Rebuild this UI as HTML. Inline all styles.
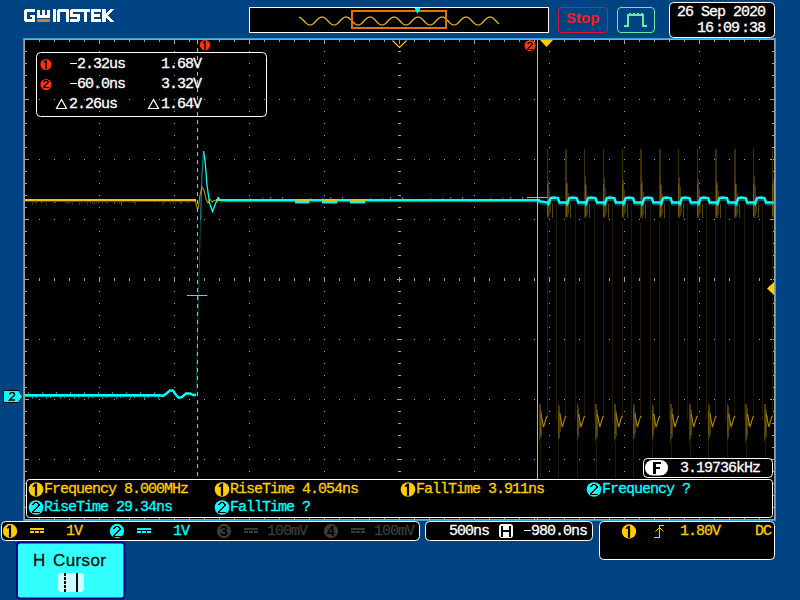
<!DOCTYPE html>
<html><head><meta charset="utf-8"><style>
html,body{margin:0;padding:0}
body{width:800px;height:600px;overflow:hidden;background:#004383;position:relative}
svg{position:absolute;left:0;top:0}
.m{position:absolute;white-space:pre;font-family:"Liberation Mono",monospace;font-size:15px;letter-spacing:-1px;line-height:15px;-webkit-text-stroke:0.3px currentColor}
.s{position:absolute;white-space:pre;font-family:"Liberation Sans",sans-serif;font-weight:bold}
</style></head><body>
<svg width="800" height="600" viewBox="0 0 800 600">
<g shape-rendering="crispEdges"><rect x="25" y="9" width="10" height="3" fill="#fff"/><rect x="24" y="10" width="3" height="11" fill="#fff"/><rect x="25" y="19" width="10" height="3" fill="#fff"/><rect x="32" y="15" width="3" height="6" fill="#fff"/><rect x="30" y="15" width="5" height="2" fill="#fff"/><rect x="37" y="10" width="3" height="8" fill="#fff"/><rect x="42" y="10" width="3" height="8" fill="#fff"/><rect x="47" y="10" width="3" height="8" fill="#fff"/><rect x="37" y="15" width="13" height="3" fill="#fff"/><rect x="37" y="19" width="13" height="3" fill="#e07810"/><rect x="53" y="9" width="3" height="13" fill="#fff"/><rect x="57" y="10" width="3" height="12" fill="#fff"/><rect x="58" y="9" width="11" height="3" fill="#fff"/><rect x="66" y="9" width="3" height="13" fill="#fff"/><rect x="71" y="9" width="9" height="3" fill="#fff"/><rect x="70" y="10" width="3" height="7" fill="#fff"/><rect x="71" y="14" width="9" height="3" fill="#fff"/><rect x="77" y="14" width="3" height="7" fill="#fff"/><rect x="70" y="19" width="9" height="3" fill="#fff"/><rect x="80" y="9" width="10" height="3" fill="#fff"/><rect x="84" y="9" width="3" height="13" fill="#fff"/><rect x="91" y="9" width="10" height="3" fill="#fff"/><rect x="91" y="9" width="3" height="13" fill="#fff"/><rect x="91" y="14" width="9" height="3" fill="#fff"/><rect x="91" y="19" width="10" height="3" fill="#fff"/><rect x="102" y="9" width="4" height="13" fill="#fff"/><polygon points="105,14 110.5,9 114,9 107.5,15.5 114,22 110.5,22 105,17" fill="#fff"/></g>
<rect x="249.5" y="7.5" width="299" height="25" fill="#000" stroke="#fff" stroke-width="1"/>
<polyline points="299.0,17.14 299.5,17.30 300.0,17.54 300.5,17.83 301.0,18.17 301.5,18.56 302.0,19.00 302.5,19.47 303.0,19.96 303.5,20.48 304.0,21.00 304.5,21.52 305.0,22.04 305.5,22.53 306.0,23.00 306.5,23.44 307.0,23.83 307.5,24.17 308.0,24.46 308.5,24.70 309.0,24.86 309.5,24.97 310.0,25.00 310.5,24.97 311.0,24.86 311.5,24.70 312.0,24.46 312.5,24.17 313.0,23.83 313.5,23.44 314.0,23.00 314.5,22.53 315.0,22.04 315.5,21.52 316.0,21.00 316.5,20.48 317.0,19.96 317.5,19.47 318.0,19.00 318.5,18.56 319.0,18.17 319.5,17.83 320.0,17.54 320.5,17.30 321.0,17.14 321.5,17.03 322.0,17.00 322.5,17.03 323.0,17.14 323.5,17.30 324.0,17.54 324.5,17.83 325.0,18.17 325.5,18.56 326.0,19.00 326.5,19.47 327.0,19.96 327.5,20.48 328.0,21.00 328.5,21.52 329.0,22.04 329.5,22.53 330.0,23.00 330.5,23.44 331.0,23.83 331.5,24.17 332.0,24.46 332.5,24.70 333.0,24.86 333.5,24.97 334.0,25.00 334.5,24.97 335.0,24.86 335.5,24.70 336.0,24.46 336.5,24.17 337.0,23.83 337.5,23.44 338.0,23.00 338.5,22.53 339.0,22.04 339.5,21.52 340.0,21.00 340.5,20.48 341.0,19.96 341.5,19.47 342.0,19.00 342.5,18.56 343.0,18.17 343.5,17.83 344.0,17.54 344.5,17.30 345.0,17.14 345.5,17.03 346.0,17.00 346.5,17.03 347.0,17.14 347.5,17.30 348.0,17.54 348.5,17.83 349.0,18.17 349.5,18.56 350.0,19.00 350.5,19.47 351.0,19.96 351.5,20.48 352.0,21.00 352.5,21.52 353.0,22.04 353.5,22.53 354.0,23.00 354.5,23.44 355.0,23.83 355.5,24.17 356.0,24.46 356.5,24.70 357.0,24.86 357.5,24.97 358.0,25.00 358.5,24.97 359.0,24.86 359.5,24.70 360.0,24.46 360.5,24.17 361.0,23.83 361.5,23.44 362.0,23.00 362.5,22.53 363.0,22.04 363.5,21.52 364.0,21.00 364.5,20.48 365.0,19.96 365.5,19.47 366.0,19.00 366.5,18.56 367.0,18.17 367.5,17.83 368.0,17.54 368.5,17.30 369.0,17.14 369.5,17.03 370.0,17.00 370.5,17.03 371.0,17.14 371.5,17.30 372.0,17.54 372.5,17.83 373.0,18.17 373.5,18.56 374.0,19.00 374.5,19.47 375.0,19.96 375.5,20.48 376.0,21.00 376.5,21.52 377.0,22.04 377.5,22.53 378.0,23.00 378.5,23.44 379.0,23.83 379.5,24.17 380.0,24.46 380.5,24.70 381.0,24.86 381.5,24.97 382.0,25.00 382.5,24.97 383.0,24.86 383.5,24.70 384.0,24.46 384.5,24.17 385.0,23.83 385.5,23.44 386.0,23.00 386.5,22.53 387.0,22.04 387.5,21.52 388.0,21.00 388.5,20.48 389.0,19.96 389.5,19.47 390.0,19.00 390.5,18.56 391.0,18.17 391.5,17.83 392.0,17.54 392.5,17.30 393.0,17.14 393.5,17.03 394.0,17.00 394.5,17.03 395.0,17.14 395.5,17.30 396.0,17.54 396.5,17.83 397.0,18.17 397.5,18.56 398.0,19.00 398.5,19.47 399.0,19.96 399.5,20.48 400.0,21.00 400.5,21.52 401.0,22.04 401.5,22.53 402.0,23.00 402.5,23.44 403.0,23.83 403.5,24.17 404.0,24.46 404.5,24.70 405.0,24.86 405.5,24.97 406.0,25.00 406.5,24.97 407.0,24.86 407.5,24.70 408.0,24.46 408.5,24.17 409.0,23.83 409.5,23.44 410.0,23.00 410.5,22.53 411.0,22.04 411.5,21.52 412.0,21.00 412.5,20.48 413.0,19.96 413.5,19.47 414.0,19.00 414.5,18.56 415.0,18.17 415.5,17.83 416.0,17.54 416.5,17.30 417.0,17.14 417.5,17.03 418.0,17.00 418.5,17.03 419.0,17.14 419.5,17.30 420.0,17.54 420.5,17.83 421.0,18.17 421.5,18.56 422.0,19.00 422.5,19.47 423.0,19.96 423.5,20.48 424.0,21.00 424.5,21.52 425.0,22.04 425.5,22.53 426.0,23.00 426.5,23.44 427.0,23.83 427.5,24.17 428.0,24.46 428.5,24.70 429.0,24.86 429.5,24.97 430.0,25.00 430.5,24.97 431.0,24.86 431.5,24.70 432.0,24.46 432.5,24.17 433.0,23.83 433.5,23.44 434.0,23.00 434.5,22.53 435.0,22.04 435.5,21.52 436.0,21.00 436.5,20.48 437.0,19.96 437.5,19.47 438.0,19.00 438.5,18.56 439.0,18.17 439.5,17.83 440.0,17.54 440.5,17.30 441.0,17.14 441.5,17.03 442.0,17.00 442.5,17.03 443.0,17.14 443.5,17.30 444.0,17.54 444.5,17.83 445.0,18.17 445.5,18.56 446.0,19.00 446.5,19.47 447.0,19.96 447.5,20.48 448.0,21.00 448.5,21.52 449.0,22.04 449.5,22.53 450.0,23.00 450.5,23.44 451.0,23.83 451.5,24.17 452.0,24.46 452.5,24.70 453.0,24.86 453.5,24.97 454.0,25.00 454.5,24.97 455.0,24.86 455.5,24.70 456.0,24.46 456.5,24.17 457.0,23.83 457.5,23.44 458.0,23.00 458.5,22.53 459.0,22.04 459.5,21.52 460.0,21.00 460.5,20.48 461.0,19.96 461.5,19.47 462.0,19.00 462.5,18.56 463.0,18.17 463.5,17.83 464.0,17.54 464.5,17.30 465.0,17.14 465.5,17.03 466.0,17.00 466.5,17.03 467.0,17.14 467.5,17.30 468.0,17.54 468.5,17.83 469.0,18.17 469.5,18.56 470.0,19.00 470.5,19.47 471.0,19.96 471.5,20.48 472.0,21.00 472.5,21.52 473.0,22.04 473.5,22.53 474.0,23.00 474.5,23.44 475.0,23.83 475.5,24.17 476.0,24.46 476.5,24.70 477.0,24.86 477.5,24.97 478.0,25.00 478.5,24.97 479.0,24.86 479.5,24.70 480.0,24.46 480.5,24.17 481.0,23.83 481.5,23.44 482.0,23.00 482.5,22.53 483.0,22.04 483.5,21.52 484.0,21.00 484.5,20.48 485.0,19.96 485.5,19.47 486.0,19.00 486.5,18.56 487.0,18.17 487.5,17.83 488.0,17.54 488.5,17.30 489.0,17.14 489.5,17.03 490.0,17.00 490.5,17.03 491.0,17.14 491.5,17.30 492.0,17.54 492.5,17.83 493.0,18.17 493.5,18.56 494.0,19.00 494.5,19.47 495.0,19.96 495.5,20.48 496.0,21.00 496.5,21.52 497.0,22.04 497.5,22.53 498.0,23.00 498.5,23.44 499.0,23.83" fill="none" stroke="#f2c200" stroke-width="1.2"/>
<rect x="352" y="11" width="94" height="17" fill="none" stroke="#e07010" stroke-width="2"/>
<polygon points="414.5,8 420.5,8 417.5,14" fill="#00ffff"/>
<rect x="558.5" y="7.5" width="49" height="25" rx="3" fill="none" stroke="#e8102a" stroke-width="1"/>
<rect x="617.5" y="7.5" width="37" height="25" rx="3.5" fill="none" stroke="#66ee99" stroke-width="1"/>
<g shape-rendering="crispEdges"><rect x="624" y="25" width="5" height="2" fill="#66ee99"/><rect x="627" y="14" width="2" height="13" fill="#66ee99"/><rect x="627" y="14" width="17" height="2" fill="#66ee99"/><rect x="642" y="14" width="2" height="13" fill="#66ee99"/><rect x="642" y="25" width="5" height="2" fill="#66ee99"/><rect x="629" y="13" width="2" height="1" fill="#66ee99"/><rect x="633" y="13" width="2" height="1" fill="#66ee99"/><rect x="637" y="13" width="2" height="1" fill="#66ee99"/><rect x="641" y="13" width="2" height="1" fill="#66ee99"/></g>
<rect x="669.5" y="2.5" width="105" height="35" rx="4" fill="#000" stroke="#fff" stroke-width="1"/>
<g shape-rendering="crispEdges"><rect x="24" y="39" width="751" height="481" fill="#000"/><rect x="23" y="38" width="753" height="1" fill="#3a9ad8"/><rect x="23" y="38" width="1" height="483" fill="#3a9ad8"/><rect x="775" y="38" width="1" height="483" fill="#3a9ad8"/><rect x="23" y="520" width="753" height="1" fill="#3a9ad8"/><rect x="24" y="39" width="751" height="1" fill="#a0a0a0"/><rect x="24" y="39" width="1" height="481" fill="#a0a0a0"/><rect x="774" y="39" width="1" height="481" fill="#a0a0a0"/><rect x="24" y="519" width="751" height="1" fill="#a0a0a0"/><rect x="39" y="40" width="1" height="2" fill="#a0a0a0"/><rect x="39" y="517" width="1" height="2" fill="#a0a0a0"/><rect x="54" y="40" width="1" height="2" fill="#a0a0a0"/><rect x="54" y="517" width="1" height="2" fill="#a0a0a0"/><rect x="69" y="40" width="1" height="2" fill="#a0a0a0"/><rect x="69" y="517" width="1" height="2" fill="#a0a0a0"/><rect x="84" y="40" width="1" height="2" fill="#a0a0a0"/><rect x="84" y="517" width="1" height="2" fill="#a0a0a0"/><rect x="99" y="40" width="1" height="4" fill="#a0a0a0"/><rect x="99" y="515" width="1" height="4" fill="#a0a0a0"/><rect x="114" y="40" width="1" height="2" fill="#a0a0a0"/><rect x="114" y="517" width="1" height="2" fill="#a0a0a0"/><rect x="129" y="40" width="1" height="2" fill="#a0a0a0"/><rect x="129" y="517" width="1" height="2" fill="#a0a0a0"/><rect x="144" y="40" width="1" height="2" fill="#a0a0a0"/><rect x="144" y="517" width="1" height="2" fill="#a0a0a0"/><rect x="159" y="40" width="1" height="2" fill="#a0a0a0"/><rect x="159" y="517" width="1" height="2" fill="#a0a0a0"/><rect x="174" y="40" width="1" height="4" fill="#a0a0a0"/><rect x="174" y="515" width="1" height="4" fill="#a0a0a0"/><rect x="189" y="40" width="1" height="2" fill="#a0a0a0"/><rect x="189" y="517" width="1" height="2" fill="#a0a0a0"/><rect x="204" y="40" width="1" height="2" fill="#a0a0a0"/><rect x="204" y="517" width="1" height="2" fill="#a0a0a0"/><rect x="219" y="40" width="1" height="2" fill="#a0a0a0"/><rect x="219" y="517" width="1" height="2" fill="#a0a0a0"/><rect x="234" y="40" width="1" height="2" fill="#a0a0a0"/><rect x="234" y="517" width="1" height="2" fill="#a0a0a0"/><rect x="249" y="40" width="1" height="4" fill="#a0a0a0"/><rect x="249" y="515" width="1" height="4" fill="#a0a0a0"/><rect x="264" y="40" width="1" height="2" fill="#a0a0a0"/><rect x="264" y="517" width="1" height="2" fill="#a0a0a0"/><rect x="279" y="40" width="1" height="2" fill="#a0a0a0"/><rect x="279" y="517" width="1" height="2" fill="#a0a0a0"/><rect x="294" y="40" width="1" height="2" fill="#a0a0a0"/><rect x="294" y="517" width="1" height="2" fill="#a0a0a0"/><rect x="309" y="40" width="1" height="2" fill="#a0a0a0"/><rect x="309" y="517" width="1" height="2" fill="#a0a0a0"/><rect x="324" y="40" width="1" height="4" fill="#a0a0a0"/><rect x="324" y="515" width="1" height="4" fill="#a0a0a0"/><rect x="339" y="40" width="1" height="2" fill="#a0a0a0"/><rect x="339" y="517" width="1" height="2" fill="#a0a0a0"/><rect x="354" y="40" width="1" height="2" fill="#a0a0a0"/><rect x="354" y="517" width="1" height="2" fill="#a0a0a0"/><rect x="369" y="40" width="1" height="2" fill="#a0a0a0"/><rect x="369" y="517" width="1" height="2" fill="#a0a0a0"/><rect x="384" y="40" width="1" height="2" fill="#a0a0a0"/><rect x="384" y="517" width="1" height="2" fill="#a0a0a0"/><rect x="399" y="40" width="1" height="4" fill="#a0a0a0"/><rect x="399" y="515" width="1" height="4" fill="#a0a0a0"/><rect x="414" y="40" width="1" height="2" fill="#a0a0a0"/><rect x="414" y="517" width="1" height="2" fill="#a0a0a0"/><rect x="429" y="40" width="1" height="2" fill="#a0a0a0"/><rect x="429" y="517" width="1" height="2" fill="#a0a0a0"/><rect x="444" y="40" width="1" height="2" fill="#a0a0a0"/><rect x="444" y="517" width="1" height="2" fill="#a0a0a0"/><rect x="459" y="40" width="1" height="2" fill="#a0a0a0"/><rect x="459" y="517" width="1" height="2" fill="#a0a0a0"/><rect x="474" y="40" width="1" height="4" fill="#a0a0a0"/><rect x="474" y="515" width="1" height="4" fill="#a0a0a0"/><rect x="489" y="40" width="1" height="2" fill="#a0a0a0"/><rect x="489" y="517" width="1" height="2" fill="#a0a0a0"/><rect x="504" y="40" width="1" height="2" fill="#a0a0a0"/><rect x="504" y="517" width="1" height="2" fill="#a0a0a0"/><rect x="519" y="40" width="1" height="2" fill="#a0a0a0"/><rect x="519" y="517" width="1" height="2" fill="#a0a0a0"/><rect x="534" y="40" width="1" height="2" fill="#a0a0a0"/><rect x="534" y="517" width="1" height="2" fill="#a0a0a0"/><rect x="549" y="40" width="1" height="4" fill="#a0a0a0"/><rect x="549" y="515" width="1" height="4" fill="#a0a0a0"/><rect x="564" y="40" width="1" height="2" fill="#a0a0a0"/><rect x="564" y="517" width="1" height="2" fill="#a0a0a0"/><rect x="579" y="40" width="1" height="2" fill="#a0a0a0"/><rect x="579" y="517" width="1" height="2" fill="#a0a0a0"/><rect x="594" y="40" width="1" height="2" fill="#a0a0a0"/><rect x="594" y="517" width="1" height="2" fill="#a0a0a0"/><rect x="609" y="40" width="1" height="2" fill="#a0a0a0"/><rect x="609" y="517" width="1" height="2" fill="#a0a0a0"/><rect x="624" y="40" width="1" height="4" fill="#a0a0a0"/><rect x="624" y="515" width="1" height="4" fill="#a0a0a0"/><rect x="639" y="40" width="1" height="2" fill="#a0a0a0"/><rect x="639" y="517" width="1" height="2" fill="#a0a0a0"/><rect x="654" y="40" width="1" height="2" fill="#a0a0a0"/><rect x="654" y="517" width="1" height="2" fill="#a0a0a0"/><rect x="669" y="40" width="1" height="2" fill="#a0a0a0"/><rect x="669" y="517" width="1" height="2" fill="#a0a0a0"/><rect x="684" y="40" width="1" height="2" fill="#a0a0a0"/><rect x="684" y="517" width="1" height="2" fill="#a0a0a0"/><rect x="699" y="40" width="1" height="4" fill="#a0a0a0"/><rect x="699" y="515" width="1" height="4" fill="#a0a0a0"/><rect x="714" y="40" width="1" height="2" fill="#a0a0a0"/><rect x="714" y="517" width="1" height="2" fill="#a0a0a0"/><rect x="729" y="40" width="1" height="2" fill="#a0a0a0"/><rect x="729" y="517" width="1" height="2" fill="#a0a0a0"/><rect x="744" y="40" width="1" height="2" fill="#a0a0a0"/><rect x="744" y="517" width="1" height="2" fill="#a0a0a0"/><rect x="759" y="40" width="1" height="2" fill="#a0a0a0"/><rect x="759" y="517" width="1" height="2" fill="#a0a0a0"/><rect x="25" y="51" width="2" height="1" fill="#a0a0a0"/><rect x="772" y="51" width="2" height="1" fill="#a0a0a0"/><rect x="25" y="63" width="2" height="1" fill="#a0a0a0"/><rect x="772" y="63" width="2" height="1" fill="#a0a0a0"/><rect x="25" y="75" width="2" height="1" fill="#a0a0a0"/><rect x="772" y="75" width="2" height="1" fill="#a0a0a0"/><rect x="25" y="87" width="2" height="1" fill="#a0a0a0"/><rect x="772" y="87" width="2" height="1" fill="#a0a0a0"/><rect x="25" y="99" width="4" height="1" fill="#a0a0a0"/><rect x="770" y="99" width="4" height="1" fill="#a0a0a0"/><rect x="25" y="111" width="2" height="1" fill="#a0a0a0"/><rect x="772" y="111" width="2" height="1" fill="#a0a0a0"/><rect x="25" y="123" width="2" height="1" fill="#a0a0a0"/><rect x="772" y="123" width="2" height="1" fill="#a0a0a0"/><rect x="25" y="135" width="2" height="1" fill="#a0a0a0"/><rect x="772" y="135" width="2" height="1" fill="#a0a0a0"/><rect x="25" y="147" width="2" height="1" fill="#a0a0a0"/><rect x="772" y="147" width="2" height="1" fill="#a0a0a0"/><rect x="25" y="159" width="4" height="1" fill="#a0a0a0"/><rect x="770" y="159" width="4" height="1" fill="#a0a0a0"/><rect x="25" y="171" width="2" height="1" fill="#a0a0a0"/><rect x="772" y="171" width="2" height="1" fill="#a0a0a0"/><rect x="25" y="183" width="2" height="1" fill="#a0a0a0"/><rect x="772" y="183" width="2" height="1" fill="#a0a0a0"/><rect x="25" y="195" width="2" height="1" fill="#a0a0a0"/><rect x="772" y="195" width="2" height="1" fill="#a0a0a0"/><rect x="25" y="207" width="2" height="1" fill="#a0a0a0"/><rect x="772" y="207" width="2" height="1" fill="#a0a0a0"/><rect x="25" y="219" width="4" height="1" fill="#a0a0a0"/><rect x="770" y="219" width="4" height="1" fill="#a0a0a0"/><rect x="25" y="231" width="2" height="1" fill="#a0a0a0"/><rect x="772" y="231" width="2" height="1" fill="#a0a0a0"/><rect x="25" y="243" width="2" height="1" fill="#a0a0a0"/><rect x="772" y="243" width="2" height="1" fill="#a0a0a0"/><rect x="25" y="255" width="2" height="1" fill="#a0a0a0"/><rect x="772" y="255" width="2" height="1" fill="#a0a0a0"/><rect x="25" y="267" width="2" height="1" fill="#a0a0a0"/><rect x="772" y="267" width="2" height="1" fill="#a0a0a0"/><rect x="25" y="279" width="4" height="1" fill="#a0a0a0"/><rect x="770" y="279" width="4" height="1" fill="#a0a0a0"/><rect x="25" y="291" width="2" height="1" fill="#a0a0a0"/><rect x="772" y="291" width="2" height="1" fill="#a0a0a0"/><rect x="25" y="303" width="2" height="1" fill="#a0a0a0"/><rect x="772" y="303" width="2" height="1" fill="#a0a0a0"/><rect x="25" y="315" width="2" height="1" fill="#a0a0a0"/><rect x="772" y="315" width="2" height="1" fill="#a0a0a0"/><rect x="25" y="327" width="2" height="1" fill="#a0a0a0"/><rect x="772" y="327" width="2" height="1" fill="#a0a0a0"/><rect x="25" y="339" width="4" height="1" fill="#a0a0a0"/><rect x="770" y="339" width="4" height="1" fill="#a0a0a0"/><rect x="25" y="351" width="2" height="1" fill="#a0a0a0"/><rect x="772" y="351" width="2" height="1" fill="#a0a0a0"/><rect x="25" y="363" width="2" height="1" fill="#a0a0a0"/><rect x="772" y="363" width="2" height="1" fill="#a0a0a0"/><rect x="25" y="375" width="2" height="1" fill="#a0a0a0"/><rect x="772" y="375" width="2" height="1" fill="#a0a0a0"/><rect x="25" y="387" width="2" height="1" fill="#a0a0a0"/><rect x="772" y="387" width="2" height="1" fill="#a0a0a0"/><rect x="25" y="399" width="4" height="1" fill="#a0a0a0"/><rect x="770" y="399" width="4" height="1" fill="#a0a0a0"/><rect x="25" y="411" width="2" height="1" fill="#a0a0a0"/><rect x="772" y="411" width="2" height="1" fill="#a0a0a0"/><rect x="25" y="423" width="2" height="1" fill="#a0a0a0"/><rect x="772" y="423" width="2" height="1" fill="#a0a0a0"/><rect x="25" y="435" width="2" height="1" fill="#a0a0a0"/><rect x="772" y="435" width="2" height="1" fill="#a0a0a0"/><rect x="25" y="447" width="2" height="1" fill="#a0a0a0"/><rect x="772" y="447" width="2" height="1" fill="#a0a0a0"/><rect x="25" y="459" width="4" height="1" fill="#a0a0a0"/><rect x="770" y="459" width="4" height="1" fill="#a0a0a0"/><rect x="25" y="471" width="2" height="1" fill="#a0a0a0"/><rect x="772" y="471" width="2" height="1" fill="#a0a0a0"/><rect x="25" y="483" width="2" height="1" fill="#a0a0a0"/><rect x="772" y="483" width="2" height="1" fill="#a0a0a0"/><rect x="25" y="495" width="2" height="1" fill="#a0a0a0"/><rect x="772" y="495" width="2" height="1" fill="#a0a0a0"/><rect x="25" y="507" width="2" height="1" fill="#a0a0a0"/><rect x="772" y="507" width="2" height="1" fill="#a0a0a0"/><rect x="39" y="99" width="1" height="1" fill="#a0a0a0"/><rect x="54" y="99" width="1" height="1" fill="#a0a0a0"/><rect x="69" y="99" width="1" height="1" fill="#a0a0a0"/><rect x="84" y="99" width="1" height="1" fill="#a0a0a0"/><rect x="99" y="99" width="1" height="1" fill="#a0a0a0"/><rect x="114" y="99" width="1" height="1" fill="#a0a0a0"/><rect x="129" y="99" width="1" height="1" fill="#a0a0a0"/><rect x="144" y="99" width="1" height="1" fill="#a0a0a0"/><rect x="159" y="99" width="1" height="1" fill="#a0a0a0"/><rect x="174" y="99" width="1" height="1" fill="#a0a0a0"/><rect x="189" y="99" width="1" height="1" fill="#a0a0a0"/><rect x="204" y="99" width="1" height="1" fill="#a0a0a0"/><rect x="219" y="99" width="1" height="1" fill="#a0a0a0"/><rect x="234" y="99" width="1" height="1" fill="#a0a0a0"/><rect x="249" y="99" width="1" height="1" fill="#a0a0a0"/><rect x="264" y="99" width="1" height="1" fill="#a0a0a0"/><rect x="279" y="99" width="1" height="1" fill="#a0a0a0"/><rect x="294" y="99" width="1" height="1" fill="#a0a0a0"/><rect x="309" y="99" width="1" height="1" fill="#a0a0a0"/><rect x="324" y="99" width="1" height="1" fill="#a0a0a0"/><rect x="339" y="99" width="1" height="1" fill="#a0a0a0"/><rect x="354" y="99" width="1" height="1" fill="#a0a0a0"/><rect x="369" y="99" width="1" height="1" fill="#a0a0a0"/><rect x="384" y="99" width="1" height="1" fill="#a0a0a0"/><rect x="399" y="99" width="1" height="1" fill="#a0a0a0"/><rect x="414" y="99" width="1" height="1" fill="#a0a0a0"/><rect x="429" y="99" width="1" height="1" fill="#a0a0a0"/><rect x="444" y="99" width="1" height="1" fill="#a0a0a0"/><rect x="459" y="99" width="1" height="1" fill="#a0a0a0"/><rect x="474" y="99" width="1" height="1" fill="#a0a0a0"/><rect x="489" y="99" width="1" height="1" fill="#a0a0a0"/><rect x="504" y="99" width="1" height="1" fill="#a0a0a0"/><rect x="519" y="99" width="1" height="1" fill="#a0a0a0"/><rect x="534" y="99" width="1" height="1" fill="#a0a0a0"/><rect x="549" y="99" width="1" height="1" fill="#a0a0a0"/><rect x="564" y="99" width="1" height="1" fill="#a0a0a0"/><rect x="579" y="99" width="1" height="1" fill="#a0a0a0"/><rect x="594" y="99" width="1" height="1" fill="#a0a0a0"/><rect x="609" y="99" width="1" height="1" fill="#a0a0a0"/><rect x="624" y="99" width="1" height="1" fill="#a0a0a0"/><rect x="639" y="99" width="1" height="1" fill="#a0a0a0"/><rect x="654" y="99" width="1" height="1" fill="#a0a0a0"/><rect x="669" y="99" width="1" height="1" fill="#a0a0a0"/><rect x="684" y="99" width="1" height="1" fill="#a0a0a0"/><rect x="699" y="99" width="1" height="1" fill="#a0a0a0"/><rect x="714" y="99" width="1" height="1" fill="#a0a0a0"/><rect x="729" y="99" width="1" height="1" fill="#a0a0a0"/><rect x="744" y="99" width="1" height="1" fill="#a0a0a0"/><rect x="759" y="99" width="1" height="1" fill="#a0a0a0"/><rect x="39" y="159" width="1" height="1" fill="#a0a0a0"/><rect x="54" y="159" width="1" height="1" fill="#a0a0a0"/><rect x="69" y="159" width="1" height="1" fill="#a0a0a0"/><rect x="84" y="159" width="1" height="1" fill="#a0a0a0"/><rect x="99" y="159" width="1" height="1" fill="#a0a0a0"/><rect x="114" y="159" width="1" height="1" fill="#a0a0a0"/><rect x="129" y="159" width="1" height="1" fill="#a0a0a0"/><rect x="144" y="159" width="1" height="1" fill="#a0a0a0"/><rect x="159" y="159" width="1" height="1" fill="#a0a0a0"/><rect x="174" y="159" width="1" height="1" fill="#a0a0a0"/><rect x="189" y="159" width="1" height="1" fill="#a0a0a0"/><rect x="204" y="159" width="1" height="1" fill="#a0a0a0"/><rect x="219" y="159" width="1" height="1" fill="#a0a0a0"/><rect x="234" y="159" width="1" height="1" fill="#a0a0a0"/><rect x="249" y="159" width="1" height="1" fill="#a0a0a0"/><rect x="264" y="159" width="1" height="1" fill="#a0a0a0"/><rect x="279" y="159" width="1" height="1" fill="#a0a0a0"/><rect x="294" y="159" width="1" height="1" fill="#a0a0a0"/><rect x="309" y="159" width="1" height="1" fill="#a0a0a0"/><rect x="324" y="159" width="1" height="1" fill="#a0a0a0"/><rect x="339" y="159" width="1" height="1" fill="#a0a0a0"/><rect x="354" y="159" width="1" height="1" fill="#a0a0a0"/><rect x="369" y="159" width="1" height="1" fill="#a0a0a0"/><rect x="384" y="159" width="1" height="1" fill="#a0a0a0"/><rect x="399" y="159" width="1" height="1" fill="#a0a0a0"/><rect x="414" y="159" width="1" height="1" fill="#a0a0a0"/><rect x="429" y="159" width="1" height="1" fill="#a0a0a0"/><rect x="444" y="159" width="1" height="1" fill="#a0a0a0"/><rect x="459" y="159" width="1" height="1" fill="#a0a0a0"/><rect x="474" y="159" width="1" height="1" fill="#a0a0a0"/><rect x="489" y="159" width="1" height="1" fill="#a0a0a0"/><rect x="504" y="159" width="1" height="1" fill="#a0a0a0"/><rect x="519" y="159" width="1" height="1" fill="#a0a0a0"/><rect x="534" y="159" width="1" height="1" fill="#a0a0a0"/><rect x="549" y="159" width="1" height="1" fill="#a0a0a0"/><rect x="564" y="159" width="1" height="1" fill="#a0a0a0"/><rect x="579" y="159" width="1" height="1" fill="#a0a0a0"/><rect x="594" y="159" width="1" height="1" fill="#a0a0a0"/><rect x="609" y="159" width="1" height="1" fill="#a0a0a0"/><rect x="624" y="159" width="1" height="1" fill="#a0a0a0"/><rect x="639" y="159" width="1" height="1" fill="#a0a0a0"/><rect x="654" y="159" width="1" height="1" fill="#a0a0a0"/><rect x="669" y="159" width="1" height="1" fill="#a0a0a0"/><rect x="684" y="159" width="1" height="1" fill="#a0a0a0"/><rect x="699" y="159" width="1" height="1" fill="#a0a0a0"/><rect x="714" y="159" width="1" height="1" fill="#a0a0a0"/><rect x="729" y="159" width="1" height="1" fill="#a0a0a0"/><rect x="744" y="159" width="1" height="1" fill="#a0a0a0"/><rect x="759" y="159" width="1" height="1" fill="#a0a0a0"/><rect x="39" y="219" width="1" height="1" fill="#a0a0a0"/><rect x="54" y="219" width="1" height="1" fill="#a0a0a0"/><rect x="69" y="219" width="1" height="1" fill="#a0a0a0"/><rect x="84" y="219" width="1" height="1" fill="#a0a0a0"/><rect x="99" y="219" width="1" height="1" fill="#a0a0a0"/><rect x="114" y="219" width="1" height="1" fill="#a0a0a0"/><rect x="129" y="219" width="1" height="1" fill="#a0a0a0"/><rect x="144" y="219" width="1" height="1" fill="#a0a0a0"/><rect x="159" y="219" width="1" height="1" fill="#a0a0a0"/><rect x="174" y="219" width="1" height="1" fill="#a0a0a0"/><rect x="189" y="219" width="1" height="1" fill="#a0a0a0"/><rect x="204" y="219" width="1" height="1" fill="#a0a0a0"/><rect x="219" y="219" width="1" height="1" fill="#a0a0a0"/><rect x="234" y="219" width="1" height="1" fill="#a0a0a0"/><rect x="249" y="219" width="1" height="1" fill="#a0a0a0"/><rect x="264" y="219" width="1" height="1" fill="#a0a0a0"/><rect x="279" y="219" width="1" height="1" fill="#a0a0a0"/><rect x="294" y="219" width="1" height="1" fill="#a0a0a0"/><rect x="309" y="219" width="1" height="1" fill="#a0a0a0"/><rect x="324" y="219" width="1" height="1" fill="#a0a0a0"/><rect x="339" y="219" width="1" height="1" fill="#a0a0a0"/><rect x="354" y="219" width="1" height="1" fill="#a0a0a0"/><rect x="369" y="219" width="1" height="1" fill="#a0a0a0"/><rect x="384" y="219" width="1" height="1" fill="#a0a0a0"/><rect x="399" y="219" width="1" height="1" fill="#a0a0a0"/><rect x="414" y="219" width="1" height="1" fill="#a0a0a0"/><rect x="429" y="219" width="1" height="1" fill="#a0a0a0"/><rect x="444" y="219" width="1" height="1" fill="#a0a0a0"/><rect x="459" y="219" width="1" height="1" fill="#a0a0a0"/><rect x="474" y="219" width="1" height="1" fill="#a0a0a0"/><rect x="489" y="219" width="1" height="1" fill="#a0a0a0"/><rect x="504" y="219" width="1" height="1" fill="#a0a0a0"/><rect x="519" y="219" width="1" height="1" fill="#a0a0a0"/><rect x="534" y="219" width="1" height="1" fill="#a0a0a0"/><rect x="549" y="219" width="1" height="1" fill="#a0a0a0"/><rect x="564" y="219" width="1" height="1" fill="#a0a0a0"/><rect x="579" y="219" width="1" height="1" fill="#a0a0a0"/><rect x="594" y="219" width="1" height="1" fill="#a0a0a0"/><rect x="609" y="219" width="1" height="1" fill="#a0a0a0"/><rect x="624" y="219" width="1" height="1" fill="#a0a0a0"/><rect x="639" y="219" width="1" height="1" fill="#a0a0a0"/><rect x="654" y="219" width="1" height="1" fill="#a0a0a0"/><rect x="669" y="219" width="1" height="1" fill="#a0a0a0"/><rect x="684" y="219" width="1" height="1" fill="#a0a0a0"/><rect x="699" y="219" width="1" height="1" fill="#a0a0a0"/><rect x="714" y="219" width="1" height="1" fill="#a0a0a0"/><rect x="729" y="219" width="1" height="1" fill="#a0a0a0"/><rect x="744" y="219" width="1" height="1" fill="#a0a0a0"/><rect x="759" y="219" width="1" height="1" fill="#a0a0a0"/><rect x="39" y="339" width="1" height="1" fill="#a0a0a0"/><rect x="54" y="339" width="1" height="1" fill="#a0a0a0"/><rect x="69" y="339" width="1" height="1" fill="#a0a0a0"/><rect x="84" y="339" width="1" height="1" fill="#a0a0a0"/><rect x="99" y="339" width="1" height="1" fill="#a0a0a0"/><rect x="114" y="339" width="1" height="1" fill="#a0a0a0"/><rect x="129" y="339" width="1" height="1" fill="#a0a0a0"/><rect x="144" y="339" width="1" height="1" fill="#a0a0a0"/><rect x="159" y="339" width="1" height="1" fill="#a0a0a0"/><rect x="174" y="339" width="1" height="1" fill="#a0a0a0"/><rect x="189" y="339" width="1" height="1" fill="#a0a0a0"/><rect x="204" y="339" width="1" height="1" fill="#a0a0a0"/><rect x="219" y="339" width="1" height="1" fill="#a0a0a0"/><rect x="234" y="339" width="1" height="1" fill="#a0a0a0"/><rect x="249" y="339" width="1" height="1" fill="#a0a0a0"/><rect x="264" y="339" width="1" height="1" fill="#a0a0a0"/><rect x="279" y="339" width="1" height="1" fill="#a0a0a0"/><rect x="294" y="339" width="1" height="1" fill="#a0a0a0"/><rect x="309" y="339" width="1" height="1" fill="#a0a0a0"/><rect x="324" y="339" width="1" height="1" fill="#a0a0a0"/><rect x="339" y="339" width="1" height="1" fill="#a0a0a0"/><rect x="354" y="339" width="1" height="1" fill="#a0a0a0"/><rect x="369" y="339" width="1" height="1" fill="#a0a0a0"/><rect x="384" y="339" width="1" height="1" fill="#a0a0a0"/><rect x="399" y="339" width="1" height="1" fill="#a0a0a0"/><rect x="414" y="339" width="1" height="1" fill="#a0a0a0"/><rect x="429" y="339" width="1" height="1" fill="#a0a0a0"/><rect x="444" y="339" width="1" height="1" fill="#a0a0a0"/><rect x="459" y="339" width="1" height="1" fill="#a0a0a0"/><rect x="474" y="339" width="1" height="1" fill="#a0a0a0"/><rect x="489" y="339" width="1" height="1" fill="#a0a0a0"/><rect x="504" y="339" width="1" height="1" fill="#a0a0a0"/><rect x="519" y="339" width="1" height="1" fill="#a0a0a0"/><rect x="534" y="339" width="1" height="1" fill="#a0a0a0"/><rect x="549" y="339" width="1" height="1" fill="#a0a0a0"/><rect x="564" y="339" width="1" height="1" fill="#a0a0a0"/><rect x="579" y="339" width="1" height="1" fill="#a0a0a0"/><rect x="594" y="339" width="1" height="1" fill="#a0a0a0"/><rect x="609" y="339" width="1" height="1" fill="#a0a0a0"/><rect x="624" y="339" width="1" height="1" fill="#a0a0a0"/><rect x="639" y="339" width="1" height="1" fill="#a0a0a0"/><rect x="654" y="339" width="1" height="1" fill="#a0a0a0"/><rect x="669" y="339" width="1" height="1" fill="#a0a0a0"/><rect x="684" y="339" width="1" height="1" fill="#a0a0a0"/><rect x="699" y="339" width="1" height="1" fill="#a0a0a0"/><rect x="714" y="339" width="1" height="1" fill="#a0a0a0"/><rect x="729" y="339" width="1" height="1" fill="#a0a0a0"/><rect x="744" y="339" width="1" height="1" fill="#a0a0a0"/><rect x="759" y="339" width="1" height="1" fill="#a0a0a0"/><rect x="39" y="399" width="1" height="1" fill="#a0a0a0"/><rect x="54" y="399" width="1" height="1" fill="#a0a0a0"/><rect x="69" y="399" width="1" height="1" fill="#a0a0a0"/><rect x="84" y="399" width="1" height="1" fill="#a0a0a0"/><rect x="99" y="399" width="1" height="1" fill="#a0a0a0"/><rect x="114" y="399" width="1" height="1" fill="#a0a0a0"/><rect x="129" y="399" width="1" height="1" fill="#a0a0a0"/><rect x="144" y="399" width="1" height="1" fill="#a0a0a0"/><rect x="159" y="399" width="1" height="1" fill="#a0a0a0"/><rect x="174" y="399" width="1" height="1" fill="#a0a0a0"/><rect x="189" y="399" width="1" height="1" fill="#a0a0a0"/><rect x="204" y="399" width="1" height="1" fill="#a0a0a0"/><rect x="219" y="399" width="1" height="1" fill="#a0a0a0"/><rect x="234" y="399" width="1" height="1" fill="#a0a0a0"/><rect x="249" y="399" width="1" height="1" fill="#a0a0a0"/><rect x="264" y="399" width="1" height="1" fill="#a0a0a0"/><rect x="279" y="399" width="1" height="1" fill="#a0a0a0"/><rect x="294" y="399" width="1" height="1" fill="#a0a0a0"/><rect x="309" y="399" width="1" height="1" fill="#a0a0a0"/><rect x="324" y="399" width="1" height="1" fill="#a0a0a0"/><rect x="339" y="399" width="1" height="1" fill="#a0a0a0"/><rect x="354" y="399" width="1" height="1" fill="#a0a0a0"/><rect x="369" y="399" width="1" height="1" fill="#a0a0a0"/><rect x="384" y="399" width="1" height="1" fill="#a0a0a0"/><rect x="399" y="399" width="1" height="1" fill="#a0a0a0"/><rect x="414" y="399" width="1" height="1" fill="#a0a0a0"/><rect x="429" y="399" width="1" height="1" fill="#a0a0a0"/><rect x="444" y="399" width="1" height="1" fill="#a0a0a0"/><rect x="459" y="399" width="1" height="1" fill="#a0a0a0"/><rect x="474" y="399" width="1" height="1" fill="#a0a0a0"/><rect x="489" y="399" width="1" height="1" fill="#a0a0a0"/><rect x="504" y="399" width="1" height="1" fill="#a0a0a0"/><rect x="519" y="399" width="1" height="1" fill="#a0a0a0"/><rect x="534" y="399" width="1" height="1" fill="#a0a0a0"/><rect x="549" y="399" width="1" height="1" fill="#a0a0a0"/><rect x="564" y="399" width="1" height="1" fill="#a0a0a0"/><rect x="579" y="399" width="1" height="1" fill="#a0a0a0"/><rect x="594" y="399" width="1" height="1" fill="#a0a0a0"/><rect x="609" y="399" width="1" height="1" fill="#a0a0a0"/><rect x="624" y="399" width="1" height="1" fill="#a0a0a0"/><rect x="639" y="399" width="1" height="1" fill="#a0a0a0"/><rect x="654" y="399" width="1" height="1" fill="#a0a0a0"/><rect x="669" y="399" width="1" height="1" fill="#a0a0a0"/><rect x="684" y="399" width="1" height="1" fill="#a0a0a0"/><rect x="699" y="399" width="1" height="1" fill="#a0a0a0"/><rect x="714" y="399" width="1" height="1" fill="#a0a0a0"/><rect x="729" y="399" width="1" height="1" fill="#a0a0a0"/><rect x="744" y="399" width="1" height="1" fill="#a0a0a0"/><rect x="759" y="399" width="1" height="1" fill="#a0a0a0"/><rect x="39" y="459" width="1" height="1" fill="#a0a0a0"/><rect x="54" y="459" width="1" height="1" fill="#a0a0a0"/><rect x="69" y="459" width="1" height="1" fill="#a0a0a0"/><rect x="84" y="459" width="1" height="1" fill="#a0a0a0"/><rect x="99" y="459" width="1" height="1" fill="#a0a0a0"/><rect x="114" y="459" width="1" height="1" fill="#a0a0a0"/><rect x="129" y="459" width="1" height="1" fill="#a0a0a0"/><rect x="144" y="459" width="1" height="1" fill="#a0a0a0"/><rect x="159" y="459" width="1" height="1" fill="#a0a0a0"/><rect x="174" y="459" width="1" height="1" fill="#a0a0a0"/><rect x="189" y="459" width="1" height="1" fill="#a0a0a0"/><rect x="204" y="459" width="1" height="1" fill="#a0a0a0"/><rect x="219" y="459" width="1" height="1" fill="#a0a0a0"/><rect x="234" y="459" width="1" height="1" fill="#a0a0a0"/><rect x="249" y="459" width="1" height="1" fill="#a0a0a0"/><rect x="264" y="459" width="1" height="1" fill="#a0a0a0"/><rect x="279" y="459" width="1" height="1" fill="#a0a0a0"/><rect x="294" y="459" width="1" height="1" fill="#a0a0a0"/><rect x="309" y="459" width="1" height="1" fill="#a0a0a0"/><rect x="324" y="459" width="1" height="1" fill="#a0a0a0"/><rect x="339" y="459" width="1" height="1" fill="#a0a0a0"/><rect x="354" y="459" width="1" height="1" fill="#a0a0a0"/><rect x="369" y="459" width="1" height="1" fill="#a0a0a0"/><rect x="384" y="459" width="1" height="1" fill="#a0a0a0"/><rect x="399" y="459" width="1" height="1" fill="#a0a0a0"/><rect x="414" y="459" width="1" height="1" fill="#a0a0a0"/><rect x="429" y="459" width="1" height="1" fill="#a0a0a0"/><rect x="444" y="459" width="1" height="1" fill="#a0a0a0"/><rect x="459" y="459" width="1" height="1" fill="#a0a0a0"/><rect x="474" y="459" width="1" height="1" fill="#a0a0a0"/><rect x="489" y="459" width="1" height="1" fill="#a0a0a0"/><rect x="504" y="459" width="1" height="1" fill="#a0a0a0"/><rect x="519" y="459" width="1" height="1" fill="#a0a0a0"/><rect x="534" y="459" width="1" height="1" fill="#a0a0a0"/><rect x="549" y="459" width="1" height="1" fill="#a0a0a0"/><rect x="564" y="459" width="1" height="1" fill="#a0a0a0"/><rect x="579" y="459" width="1" height="1" fill="#a0a0a0"/><rect x="594" y="459" width="1" height="1" fill="#a0a0a0"/><rect x="609" y="459" width="1" height="1" fill="#a0a0a0"/><rect x="624" y="459" width="1" height="1" fill="#a0a0a0"/><rect x="639" y="459" width="1" height="1" fill="#a0a0a0"/><rect x="654" y="459" width="1" height="1" fill="#a0a0a0"/><rect x="669" y="459" width="1" height="1" fill="#a0a0a0"/><rect x="684" y="459" width="1" height="1" fill="#a0a0a0"/><rect x="699" y="459" width="1" height="1" fill="#a0a0a0"/><rect x="714" y="459" width="1" height="1" fill="#a0a0a0"/><rect x="729" y="459" width="1" height="1" fill="#a0a0a0"/><rect x="744" y="459" width="1" height="1" fill="#a0a0a0"/><rect x="759" y="459" width="1" height="1" fill="#a0a0a0"/><rect x="99" y="51" width="1" height="1" fill="#a0a0a0"/><rect x="99" y="63" width="1" height="1" fill="#a0a0a0"/><rect x="99" y="75" width="1" height="1" fill="#a0a0a0"/><rect x="99" y="87" width="1" height="1" fill="#a0a0a0"/><rect x="99" y="99" width="1" height="1" fill="#a0a0a0"/><rect x="99" y="111" width="1" height="1" fill="#a0a0a0"/><rect x="99" y="123" width="1" height="1" fill="#a0a0a0"/><rect x="99" y="135" width="1" height="1" fill="#a0a0a0"/><rect x="99" y="147" width="1" height="1" fill="#a0a0a0"/><rect x="99" y="159" width="1" height="1" fill="#a0a0a0"/><rect x="99" y="171" width="1" height="1" fill="#a0a0a0"/><rect x="99" y="183" width="1" height="1" fill="#a0a0a0"/><rect x="99" y="195" width="1" height="1" fill="#a0a0a0"/><rect x="99" y="207" width="1" height="1" fill="#a0a0a0"/><rect x="99" y="219" width="1" height="1" fill="#a0a0a0"/><rect x="99" y="231" width="1" height="1" fill="#a0a0a0"/><rect x="99" y="243" width="1" height="1" fill="#a0a0a0"/><rect x="99" y="255" width="1" height="1" fill="#a0a0a0"/><rect x="99" y="267" width="1" height="1" fill="#a0a0a0"/><rect x="99" y="279" width="1" height="1" fill="#a0a0a0"/><rect x="99" y="291" width="1" height="1" fill="#a0a0a0"/><rect x="99" y="303" width="1" height="1" fill="#a0a0a0"/><rect x="99" y="315" width="1" height="1" fill="#a0a0a0"/><rect x="99" y="327" width="1" height="1" fill="#a0a0a0"/><rect x="99" y="339" width="1" height="1" fill="#a0a0a0"/><rect x="99" y="351" width="1" height="1" fill="#a0a0a0"/><rect x="99" y="363" width="1" height="1" fill="#a0a0a0"/><rect x="99" y="375" width="1" height="1" fill="#a0a0a0"/><rect x="99" y="387" width="1" height="1" fill="#a0a0a0"/><rect x="99" y="399" width="1" height="1" fill="#a0a0a0"/><rect x="99" y="411" width="1" height="1" fill="#a0a0a0"/><rect x="99" y="423" width="1" height="1" fill="#a0a0a0"/><rect x="99" y="435" width="1" height="1" fill="#a0a0a0"/><rect x="99" y="447" width="1" height="1" fill="#a0a0a0"/><rect x="99" y="459" width="1" height="1" fill="#a0a0a0"/><rect x="99" y="471" width="1" height="1" fill="#a0a0a0"/><rect x="99" y="483" width="1" height="1" fill="#a0a0a0"/><rect x="99" y="495" width="1" height="1" fill="#a0a0a0"/><rect x="99" y="507" width="1" height="1" fill="#a0a0a0"/><rect x="174" y="51" width="1" height="1" fill="#a0a0a0"/><rect x="174" y="63" width="1" height="1" fill="#a0a0a0"/><rect x="174" y="75" width="1" height="1" fill="#a0a0a0"/><rect x="174" y="87" width="1" height="1" fill="#a0a0a0"/><rect x="174" y="99" width="1" height="1" fill="#a0a0a0"/><rect x="174" y="111" width="1" height="1" fill="#a0a0a0"/><rect x="174" y="123" width="1" height="1" fill="#a0a0a0"/><rect x="174" y="135" width="1" height="1" fill="#a0a0a0"/><rect x="174" y="147" width="1" height="1" fill="#a0a0a0"/><rect x="174" y="159" width="1" height="1" fill="#a0a0a0"/><rect x="174" y="171" width="1" height="1" fill="#a0a0a0"/><rect x="174" y="183" width="1" height="1" fill="#a0a0a0"/><rect x="174" y="195" width="1" height="1" fill="#a0a0a0"/><rect x="174" y="207" width="1" height="1" fill="#a0a0a0"/><rect x="174" y="219" width="1" height="1" fill="#a0a0a0"/><rect x="174" y="231" width="1" height="1" fill="#a0a0a0"/><rect x="174" y="243" width="1" height="1" fill="#a0a0a0"/><rect x="174" y="255" width="1" height="1" fill="#a0a0a0"/><rect x="174" y="267" width="1" height="1" fill="#a0a0a0"/><rect x="174" y="279" width="1" height="1" fill="#a0a0a0"/><rect x="174" y="291" width="1" height="1" fill="#a0a0a0"/><rect x="174" y="303" width="1" height="1" fill="#a0a0a0"/><rect x="174" y="315" width="1" height="1" fill="#a0a0a0"/><rect x="174" y="327" width="1" height="1" fill="#a0a0a0"/><rect x="174" y="339" width="1" height="1" fill="#a0a0a0"/><rect x="174" y="351" width="1" height="1" fill="#a0a0a0"/><rect x="174" y="363" width="1" height="1" fill="#a0a0a0"/><rect x="174" y="375" width="1" height="1" fill="#a0a0a0"/><rect x="174" y="387" width="1" height="1" fill="#a0a0a0"/><rect x="174" y="399" width="1" height="1" fill="#a0a0a0"/><rect x="174" y="411" width="1" height="1" fill="#a0a0a0"/><rect x="174" y="423" width="1" height="1" fill="#a0a0a0"/><rect x="174" y="435" width="1" height="1" fill="#a0a0a0"/><rect x="174" y="447" width="1" height="1" fill="#a0a0a0"/><rect x="174" y="459" width="1" height="1" fill="#a0a0a0"/><rect x="174" y="471" width="1" height="1" fill="#a0a0a0"/><rect x="174" y="483" width="1" height="1" fill="#a0a0a0"/><rect x="174" y="495" width="1" height="1" fill="#a0a0a0"/><rect x="174" y="507" width="1" height="1" fill="#a0a0a0"/><rect x="249" y="51" width="1" height="1" fill="#a0a0a0"/><rect x="249" y="63" width="1" height="1" fill="#a0a0a0"/><rect x="249" y="75" width="1" height="1" fill="#a0a0a0"/><rect x="249" y="87" width="1" height="1" fill="#a0a0a0"/><rect x="249" y="99" width="1" height="1" fill="#a0a0a0"/><rect x="249" y="111" width="1" height="1" fill="#a0a0a0"/><rect x="249" y="123" width="1" height="1" fill="#a0a0a0"/><rect x="249" y="135" width="1" height="1" fill="#a0a0a0"/><rect x="249" y="147" width="1" height="1" fill="#a0a0a0"/><rect x="249" y="159" width="1" height="1" fill="#a0a0a0"/><rect x="249" y="171" width="1" height="1" fill="#a0a0a0"/><rect x="249" y="183" width="1" height="1" fill="#a0a0a0"/><rect x="249" y="195" width="1" height="1" fill="#a0a0a0"/><rect x="249" y="207" width="1" height="1" fill="#a0a0a0"/><rect x="249" y="219" width="1" height="1" fill="#a0a0a0"/><rect x="249" y="231" width="1" height="1" fill="#a0a0a0"/><rect x="249" y="243" width="1" height="1" fill="#a0a0a0"/><rect x="249" y="255" width="1" height="1" fill="#a0a0a0"/><rect x="249" y="267" width="1" height="1" fill="#a0a0a0"/><rect x="249" y="279" width="1" height="1" fill="#a0a0a0"/><rect x="249" y="291" width="1" height="1" fill="#a0a0a0"/><rect x="249" y="303" width="1" height="1" fill="#a0a0a0"/><rect x="249" y="315" width="1" height="1" fill="#a0a0a0"/><rect x="249" y="327" width="1" height="1" fill="#a0a0a0"/><rect x="249" y="339" width="1" height="1" fill="#a0a0a0"/><rect x="249" y="351" width="1" height="1" fill="#a0a0a0"/><rect x="249" y="363" width="1" height="1" fill="#a0a0a0"/><rect x="249" y="375" width="1" height="1" fill="#a0a0a0"/><rect x="249" y="387" width="1" height="1" fill="#a0a0a0"/><rect x="249" y="399" width="1" height="1" fill="#a0a0a0"/><rect x="249" y="411" width="1" height="1" fill="#a0a0a0"/><rect x="249" y="423" width="1" height="1" fill="#a0a0a0"/><rect x="249" y="435" width="1" height="1" fill="#a0a0a0"/><rect x="249" y="447" width="1" height="1" fill="#a0a0a0"/><rect x="249" y="459" width="1" height="1" fill="#a0a0a0"/><rect x="249" y="471" width="1" height="1" fill="#a0a0a0"/><rect x="249" y="483" width="1" height="1" fill="#a0a0a0"/><rect x="249" y="495" width="1" height="1" fill="#a0a0a0"/><rect x="249" y="507" width="1" height="1" fill="#a0a0a0"/><rect x="324" y="51" width="1" height="1" fill="#a0a0a0"/><rect x="324" y="63" width="1" height="1" fill="#a0a0a0"/><rect x="324" y="75" width="1" height="1" fill="#a0a0a0"/><rect x="324" y="87" width="1" height="1" fill="#a0a0a0"/><rect x="324" y="99" width="1" height="1" fill="#a0a0a0"/><rect x="324" y="111" width="1" height="1" fill="#a0a0a0"/><rect x="324" y="123" width="1" height="1" fill="#a0a0a0"/><rect x="324" y="135" width="1" height="1" fill="#a0a0a0"/><rect x="324" y="147" width="1" height="1" fill="#a0a0a0"/><rect x="324" y="159" width="1" height="1" fill="#a0a0a0"/><rect x="324" y="171" width="1" height="1" fill="#a0a0a0"/><rect x="324" y="183" width="1" height="1" fill="#a0a0a0"/><rect x="324" y="195" width="1" height="1" fill="#a0a0a0"/><rect x="324" y="207" width="1" height="1" fill="#a0a0a0"/><rect x="324" y="219" width="1" height="1" fill="#a0a0a0"/><rect x="324" y="231" width="1" height="1" fill="#a0a0a0"/><rect x="324" y="243" width="1" height="1" fill="#a0a0a0"/><rect x="324" y="255" width="1" height="1" fill="#a0a0a0"/><rect x="324" y="267" width="1" height="1" fill="#a0a0a0"/><rect x="324" y="279" width="1" height="1" fill="#a0a0a0"/><rect x="324" y="291" width="1" height="1" fill="#a0a0a0"/><rect x="324" y="303" width="1" height="1" fill="#a0a0a0"/><rect x="324" y="315" width="1" height="1" fill="#a0a0a0"/><rect x="324" y="327" width="1" height="1" fill="#a0a0a0"/><rect x="324" y="339" width="1" height="1" fill="#a0a0a0"/><rect x="324" y="351" width="1" height="1" fill="#a0a0a0"/><rect x="324" y="363" width="1" height="1" fill="#a0a0a0"/><rect x="324" y="375" width="1" height="1" fill="#a0a0a0"/><rect x="324" y="387" width="1" height="1" fill="#a0a0a0"/><rect x="324" y="399" width="1" height="1" fill="#a0a0a0"/><rect x="324" y="411" width="1" height="1" fill="#a0a0a0"/><rect x="324" y="423" width="1" height="1" fill="#a0a0a0"/><rect x="324" y="435" width="1" height="1" fill="#a0a0a0"/><rect x="324" y="447" width="1" height="1" fill="#a0a0a0"/><rect x="324" y="459" width="1" height="1" fill="#a0a0a0"/><rect x="324" y="471" width="1" height="1" fill="#a0a0a0"/><rect x="324" y="483" width="1" height="1" fill="#a0a0a0"/><rect x="324" y="495" width="1" height="1" fill="#a0a0a0"/><rect x="324" y="507" width="1" height="1" fill="#a0a0a0"/><rect x="474" y="51" width="1" height="1" fill="#a0a0a0"/><rect x="474" y="63" width="1" height="1" fill="#a0a0a0"/><rect x="474" y="75" width="1" height="1" fill="#a0a0a0"/><rect x="474" y="87" width="1" height="1" fill="#a0a0a0"/><rect x="474" y="99" width="1" height="1" fill="#a0a0a0"/><rect x="474" y="111" width="1" height="1" fill="#a0a0a0"/><rect x="474" y="123" width="1" height="1" fill="#a0a0a0"/><rect x="474" y="135" width="1" height="1" fill="#a0a0a0"/><rect x="474" y="147" width="1" height="1" fill="#a0a0a0"/><rect x="474" y="159" width="1" height="1" fill="#a0a0a0"/><rect x="474" y="171" width="1" height="1" fill="#a0a0a0"/><rect x="474" y="183" width="1" height="1" fill="#a0a0a0"/><rect x="474" y="195" width="1" height="1" fill="#a0a0a0"/><rect x="474" y="207" width="1" height="1" fill="#a0a0a0"/><rect x="474" y="219" width="1" height="1" fill="#a0a0a0"/><rect x="474" y="231" width="1" height="1" fill="#a0a0a0"/><rect x="474" y="243" width="1" height="1" fill="#a0a0a0"/><rect x="474" y="255" width="1" height="1" fill="#a0a0a0"/><rect x="474" y="267" width="1" height="1" fill="#a0a0a0"/><rect x="474" y="279" width="1" height="1" fill="#a0a0a0"/><rect x="474" y="291" width="1" height="1" fill="#a0a0a0"/><rect x="474" y="303" width="1" height="1" fill="#a0a0a0"/><rect x="474" y="315" width="1" height="1" fill="#a0a0a0"/><rect x="474" y="327" width="1" height="1" fill="#a0a0a0"/><rect x="474" y="339" width="1" height="1" fill="#a0a0a0"/><rect x="474" y="351" width="1" height="1" fill="#a0a0a0"/><rect x="474" y="363" width="1" height="1" fill="#a0a0a0"/><rect x="474" y="375" width="1" height="1" fill="#a0a0a0"/><rect x="474" y="387" width="1" height="1" fill="#a0a0a0"/><rect x="474" y="399" width="1" height="1" fill="#a0a0a0"/><rect x="474" y="411" width="1" height="1" fill="#a0a0a0"/><rect x="474" y="423" width="1" height="1" fill="#a0a0a0"/><rect x="474" y="435" width="1" height="1" fill="#a0a0a0"/><rect x="474" y="447" width="1" height="1" fill="#a0a0a0"/><rect x="474" y="459" width="1" height="1" fill="#a0a0a0"/><rect x="474" y="471" width="1" height="1" fill="#a0a0a0"/><rect x="474" y="483" width="1" height="1" fill="#a0a0a0"/><rect x="474" y="495" width="1" height="1" fill="#a0a0a0"/><rect x="474" y="507" width="1" height="1" fill="#a0a0a0"/><rect x="549" y="51" width="1" height="1" fill="#a0a0a0"/><rect x="549" y="63" width="1" height="1" fill="#a0a0a0"/><rect x="549" y="75" width="1" height="1" fill="#a0a0a0"/><rect x="549" y="87" width="1" height="1" fill="#a0a0a0"/><rect x="549" y="99" width="1" height="1" fill="#a0a0a0"/><rect x="549" y="111" width="1" height="1" fill="#a0a0a0"/><rect x="549" y="123" width="1" height="1" fill="#a0a0a0"/><rect x="549" y="135" width="1" height="1" fill="#a0a0a0"/><rect x="549" y="147" width="1" height="1" fill="#a0a0a0"/><rect x="549" y="159" width="1" height="1" fill="#a0a0a0"/><rect x="549" y="171" width="1" height="1" fill="#a0a0a0"/><rect x="549" y="183" width="1" height="1" fill="#a0a0a0"/><rect x="549" y="195" width="1" height="1" fill="#a0a0a0"/><rect x="549" y="207" width="1" height="1" fill="#a0a0a0"/><rect x="549" y="219" width="1" height="1" fill="#a0a0a0"/><rect x="549" y="231" width="1" height="1" fill="#a0a0a0"/><rect x="549" y="243" width="1" height="1" fill="#a0a0a0"/><rect x="549" y="255" width="1" height="1" fill="#a0a0a0"/><rect x="549" y="267" width="1" height="1" fill="#a0a0a0"/><rect x="549" y="279" width="1" height="1" fill="#a0a0a0"/><rect x="549" y="291" width="1" height="1" fill="#a0a0a0"/><rect x="549" y="303" width="1" height="1" fill="#a0a0a0"/><rect x="549" y="315" width="1" height="1" fill="#a0a0a0"/><rect x="549" y="327" width="1" height="1" fill="#a0a0a0"/><rect x="549" y="339" width="1" height="1" fill="#a0a0a0"/><rect x="549" y="351" width="1" height="1" fill="#a0a0a0"/><rect x="549" y="363" width="1" height="1" fill="#a0a0a0"/><rect x="549" y="375" width="1" height="1" fill="#a0a0a0"/><rect x="549" y="387" width="1" height="1" fill="#a0a0a0"/><rect x="549" y="399" width="1" height="1" fill="#a0a0a0"/><rect x="549" y="411" width="1" height="1" fill="#a0a0a0"/><rect x="549" y="423" width="1" height="1" fill="#a0a0a0"/><rect x="549" y="435" width="1" height="1" fill="#a0a0a0"/><rect x="549" y="447" width="1" height="1" fill="#a0a0a0"/><rect x="549" y="459" width="1" height="1" fill="#a0a0a0"/><rect x="549" y="471" width="1" height="1" fill="#a0a0a0"/><rect x="549" y="483" width="1" height="1" fill="#a0a0a0"/><rect x="549" y="495" width="1" height="1" fill="#a0a0a0"/><rect x="549" y="507" width="1" height="1" fill="#a0a0a0"/><rect x="624" y="51" width="1" height="1" fill="#a0a0a0"/><rect x="624" y="63" width="1" height="1" fill="#a0a0a0"/><rect x="624" y="75" width="1" height="1" fill="#a0a0a0"/><rect x="624" y="87" width="1" height="1" fill="#a0a0a0"/><rect x="624" y="99" width="1" height="1" fill="#a0a0a0"/><rect x="624" y="111" width="1" height="1" fill="#a0a0a0"/><rect x="624" y="123" width="1" height="1" fill="#a0a0a0"/><rect x="624" y="135" width="1" height="1" fill="#a0a0a0"/><rect x="624" y="147" width="1" height="1" fill="#a0a0a0"/><rect x="624" y="159" width="1" height="1" fill="#a0a0a0"/><rect x="624" y="171" width="1" height="1" fill="#a0a0a0"/><rect x="624" y="183" width="1" height="1" fill="#a0a0a0"/><rect x="624" y="195" width="1" height="1" fill="#a0a0a0"/><rect x="624" y="207" width="1" height="1" fill="#a0a0a0"/><rect x="624" y="219" width="1" height="1" fill="#a0a0a0"/><rect x="624" y="231" width="1" height="1" fill="#a0a0a0"/><rect x="624" y="243" width="1" height="1" fill="#a0a0a0"/><rect x="624" y="255" width="1" height="1" fill="#a0a0a0"/><rect x="624" y="267" width="1" height="1" fill="#a0a0a0"/><rect x="624" y="279" width="1" height="1" fill="#a0a0a0"/><rect x="624" y="291" width="1" height="1" fill="#a0a0a0"/><rect x="624" y="303" width="1" height="1" fill="#a0a0a0"/><rect x="624" y="315" width="1" height="1" fill="#a0a0a0"/><rect x="624" y="327" width="1" height="1" fill="#a0a0a0"/><rect x="624" y="339" width="1" height="1" fill="#a0a0a0"/><rect x="624" y="351" width="1" height="1" fill="#a0a0a0"/><rect x="624" y="363" width="1" height="1" fill="#a0a0a0"/><rect x="624" y="375" width="1" height="1" fill="#a0a0a0"/><rect x="624" y="387" width="1" height="1" fill="#a0a0a0"/><rect x="624" y="399" width="1" height="1" fill="#a0a0a0"/><rect x="624" y="411" width="1" height="1" fill="#a0a0a0"/><rect x="624" y="423" width="1" height="1" fill="#a0a0a0"/><rect x="624" y="435" width="1" height="1" fill="#a0a0a0"/><rect x="624" y="447" width="1" height="1" fill="#a0a0a0"/><rect x="624" y="459" width="1" height="1" fill="#a0a0a0"/><rect x="624" y="471" width="1" height="1" fill="#a0a0a0"/><rect x="624" y="483" width="1" height="1" fill="#a0a0a0"/><rect x="624" y="495" width="1" height="1" fill="#a0a0a0"/><rect x="624" y="507" width="1" height="1" fill="#a0a0a0"/><rect x="699" y="51" width="1" height="1" fill="#a0a0a0"/><rect x="699" y="63" width="1" height="1" fill="#a0a0a0"/><rect x="699" y="75" width="1" height="1" fill="#a0a0a0"/><rect x="699" y="87" width="1" height="1" fill="#a0a0a0"/><rect x="699" y="99" width="1" height="1" fill="#a0a0a0"/><rect x="699" y="111" width="1" height="1" fill="#a0a0a0"/><rect x="699" y="123" width="1" height="1" fill="#a0a0a0"/><rect x="699" y="135" width="1" height="1" fill="#a0a0a0"/><rect x="699" y="147" width="1" height="1" fill="#a0a0a0"/><rect x="699" y="159" width="1" height="1" fill="#a0a0a0"/><rect x="699" y="171" width="1" height="1" fill="#a0a0a0"/><rect x="699" y="183" width="1" height="1" fill="#a0a0a0"/><rect x="699" y="195" width="1" height="1" fill="#a0a0a0"/><rect x="699" y="207" width="1" height="1" fill="#a0a0a0"/><rect x="699" y="219" width="1" height="1" fill="#a0a0a0"/><rect x="699" y="231" width="1" height="1" fill="#a0a0a0"/><rect x="699" y="243" width="1" height="1" fill="#a0a0a0"/><rect x="699" y="255" width="1" height="1" fill="#a0a0a0"/><rect x="699" y="267" width="1" height="1" fill="#a0a0a0"/><rect x="699" y="279" width="1" height="1" fill="#a0a0a0"/><rect x="699" y="291" width="1" height="1" fill="#a0a0a0"/><rect x="699" y="303" width="1" height="1" fill="#a0a0a0"/><rect x="699" y="315" width="1" height="1" fill="#a0a0a0"/><rect x="699" y="327" width="1" height="1" fill="#a0a0a0"/><rect x="699" y="339" width="1" height="1" fill="#a0a0a0"/><rect x="699" y="351" width="1" height="1" fill="#a0a0a0"/><rect x="699" y="363" width="1" height="1" fill="#a0a0a0"/><rect x="699" y="375" width="1" height="1" fill="#a0a0a0"/><rect x="699" y="387" width="1" height="1" fill="#a0a0a0"/><rect x="699" y="399" width="1" height="1" fill="#a0a0a0"/><rect x="699" y="411" width="1" height="1" fill="#a0a0a0"/><rect x="699" y="423" width="1" height="1" fill="#a0a0a0"/><rect x="699" y="435" width="1" height="1" fill="#a0a0a0"/><rect x="699" y="447" width="1" height="1" fill="#a0a0a0"/><rect x="699" y="459" width="1" height="1" fill="#a0a0a0"/><rect x="699" y="471" width="1" height="1" fill="#a0a0a0"/><rect x="699" y="483" width="1" height="1" fill="#a0a0a0"/><rect x="699" y="495" width="1" height="1" fill="#a0a0a0"/><rect x="699" y="507" width="1" height="1" fill="#a0a0a0"/><rect x="39" y="278" width="1" height="3" fill="#a0a0a0"/><rect x="54" y="278" width="1" height="3" fill="#a0a0a0"/><rect x="69" y="278" width="1" height="3" fill="#a0a0a0"/><rect x="84" y="278" width="1" height="3" fill="#a0a0a0"/><rect x="99" y="277" width="1" height="5" fill="#a0a0a0"/><rect x="114" y="278" width="1" height="3" fill="#a0a0a0"/><rect x="129" y="278" width="1" height="3" fill="#a0a0a0"/><rect x="144" y="278" width="1" height="3" fill="#a0a0a0"/><rect x="159" y="278" width="1" height="3" fill="#a0a0a0"/><rect x="174" y="277" width="1" height="5" fill="#a0a0a0"/><rect x="189" y="278" width="1" height="3" fill="#a0a0a0"/><rect x="204" y="278" width="1" height="3" fill="#a0a0a0"/><rect x="219" y="278" width="1" height="3" fill="#a0a0a0"/><rect x="234" y="278" width="1" height="3" fill="#a0a0a0"/><rect x="249" y="277" width="1" height="5" fill="#a0a0a0"/><rect x="264" y="278" width="1" height="3" fill="#a0a0a0"/><rect x="279" y="278" width="1" height="3" fill="#a0a0a0"/><rect x="294" y="278" width="1" height="3" fill="#a0a0a0"/><rect x="309" y="278" width="1" height="3" fill="#a0a0a0"/><rect x="324" y="277" width="1" height="5" fill="#a0a0a0"/><rect x="339" y="278" width="1" height="3" fill="#a0a0a0"/><rect x="354" y="278" width="1" height="3" fill="#a0a0a0"/><rect x="369" y="278" width="1" height="3" fill="#a0a0a0"/><rect x="384" y="278" width="1" height="3" fill="#a0a0a0"/><rect x="414" y="278" width="1" height="3" fill="#a0a0a0"/><rect x="429" y="278" width="1" height="3" fill="#a0a0a0"/><rect x="444" y="278" width="1" height="3" fill="#a0a0a0"/><rect x="459" y="278" width="1" height="3" fill="#a0a0a0"/><rect x="474" y="277" width="1" height="5" fill="#a0a0a0"/><rect x="489" y="278" width="1" height="3" fill="#a0a0a0"/><rect x="504" y="278" width="1" height="3" fill="#a0a0a0"/><rect x="519" y="278" width="1" height="3" fill="#a0a0a0"/><rect x="534" y="278" width="1" height="3" fill="#a0a0a0"/><rect x="549" y="277" width="1" height="5" fill="#a0a0a0"/><rect x="564" y="278" width="1" height="3" fill="#a0a0a0"/><rect x="579" y="278" width="1" height="3" fill="#a0a0a0"/><rect x="594" y="278" width="1" height="3" fill="#a0a0a0"/><rect x="609" y="278" width="1" height="3" fill="#a0a0a0"/><rect x="624" y="277" width="1" height="5" fill="#a0a0a0"/><rect x="639" y="278" width="1" height="3" fill="#a0a0a0"/><rect x="654" y="278" width="1" height="3" fill="#a0a0a0"/><rect x="669" y="278" width="1" height="3" fill="#a0a0a0"/><rect x="684" y="278" width="1" height="3" fill="#a0a0a0"/><rect x="699" y="277" width="1" height="5" fill="#a0a0a0"/><rect x="714" y="278" width="1" height="3" fill="#a0a0a0"/><rect x="729" y="278" width="1" height="3" fill="#a0a0a0"/><rect x="744" y="278" width="1" height="3" fill="#a0a0a0"/><rect x="759" y="278" width="1" height="3" fill="#a0a0a0"/><rect x="398" y="51" width="3" height="1" fill="#a0a0a0"/><rect x="398" y="63" width="3" height="1" fill="#a0a0a0"/><rect x="398" y="75" width="3" height="1" fill="#a0a0a0"/><rect x="398" y="87" width="3" height="1" fill="#a0a0a0"/><rect x="397" y="99" width="5" height="1" fill="#a0a0a0"/><rect x="398" y="111" width="3" height="1" fill="#a0a0a0"/><rect x="398" y="123" width="3" height="1" fill="#a0a0a0"/><rect x="398" y="135" width="3" height="1" fill="#a0a0a0"/><rect x="398" y="147" width="3" height="1" fill="#a0a0a0"/><rect x="397" y="159" width="5" height="1" fill="#a0a0a0"/><rect x="398" y="171" width="3" height="1" fill="#a0a0a0"/><rect x="398" y="183" width="3" height="1" fill="#a0a0a0"/><rect x="398" y="195" width="3" height="1" fill="#a0a0a0"/><rect x="398" y="207" width="3" height="1" fill="#a0a0a0"/><rect x="397" y="219" width="5" height="1" fill="#a0a0a0"/><rect x="398" y="231" width="3" height="1" fill="#a0a0a0"/><rect x="398" y="243" width="3" height="1" fill="#a0a0a0"/><rect x="398" y="255" width="3" height="1" fill="#a0a0a0"/><rect x="398" y="267" width="3" height="1" fill="#a0a0a0"/><rect x="398" y="291" width="3" height="1" fill="#a0a0a0"/><rect x="398" y="303" width="3" height="1" fill="#a0a0a0"/><rect x="398" y="315" width="3" height="1" fill="#a0a0a0"/><rect x="398" y="327" width="3" height="1" fill="#a0a0a0"/><rect x="397" y="339" width="5" height="1" fill="#a0a0a0"/><rect x="398" y="351" width="3" height="1" fill="#a0a0a0"/><rect x="398" y="363" width="3" height="1" fill="#a0a0a0"/><rect x="398" y="375" width="3" height="1" fill="#a0a0a0"/><rect x="398" y="387" width="3" height="1" fill="#a0a0a0"/><rect x="397" y="399" width="5" height="1" fill="#a0a0a0"/><rect x="398" y="411" width="3" height="1" fill="#a0a0a0"/><rect x="398" y="423" width="3" height="1" fill="#a0a0a0"/><rect x="398" y="435" width="3" height="1" fill="#a0a0a0"/><rect x="398" y="447" width="3" height="1" fill="#a0a0a0"/><rect x="397" y="459" width="5" height="1" fill="#a0a0a0"/><rect x="398" y="471" width="3" height="1" fill="#a0a0a0"/><rect x="398" y="483" width="3" height="1" fill="#a0a0a0"/><rect x="398" y="495" width="3" height="1" fill="#a0a0a0"/><rect x="398" y="507" width="3" height="1" fill="#a0a0a0"/><rect x="397" y="279" width="5" height="1" fill="#a0a0a0"/><rect x="399" y="277" width="1" height="5" fill="#a0a0a0"/></g>
<g shape-rendering="crispEdges"><rect x="25" y="199" width="171" height="2" fill="#f2c200"/><rect x="25" y="201" width="171" height="1" fill="#f2c200" opacity="0.35"/><rect x="32" y="202" width="1" height="3" fill="#f2c200" opacity="0.3"/><rect x="35" y="202" width="1" height="2" fill="#f2c200" opacity="0.2"/><rect x="36" y="202" width="1" height="1" fill="#f2c200" opacity="0.45"/><rect x="41" y="202" width="1" height="1" fill="#f2c200" opacity="0.45"/><rect x="42" y="202" width="1" height="1" fill="#f2c200" opacity="0.2"/><rect x="46" y="202" width="1" height="3" fill="#f2c200" opacity="0.2"/><rect x="52" y="202" width="1" height="3" fill="#f2c200" opacity="0.2"/><rect x="54" y="202" width="1" height="1" fill="#f2c200" opacity="0.45"/><rect x="55" y="202" width="1" height="1" fill="#f2c200" opacity="0.45"/><rect x="62" y="202" width="1" height="1" fill="#f2c200" opacity="0.2"/><rect x="66" y="202" width="1" height="1" fill="#f2c200" opacity="0.45"/><rect x="67" y="202" width="1" height="1" fill="#f2c200" opacity="0.3"/><rect x="68" y="202" width="1" height="2" fill="#f2c200" opacity="0.2"/><rect x="69" y="202" width="1" height="1" fill="#f2c200" opacity="0.2"/><rect x="70" y="202" width="1" height="2" fill="#f2c200" opacity="0.2"/><rect x="72" y="202" width="1" height="3" fill="#f2c200" opacity="0.2"/><rect x="79" y="202" width="1" height="3" fill="#f2c200" opacity="0.3"/><rect x="81" y="202" width="1" height="1" fill="#f2c200" opacity="0.3"/><rect x="85" y="202" width="1" height="1" fill="#f2c200" opacity="0.2"/><rect x="87" y="202" width="1" height="3" fill="#f2c200" opacity="0.3"/><rect x="90" y="202" width="1" height="1" fill="#f2c200" opacity="0.45"/><rect x="92" y="202" width="1" height="2" fill="#f2c200" opacity="0.3"/><rect x="94" y="202" width="1" height="3" fill="#f2c200" opacity="0.3"/><rect x="96" y="202" width="1" height="2" fill="#f2c200" opacity="0.2"/><rect x="98" y="202" width="1" height="1" fill="#f2c200" opacity="0.45"/><rect x="99" y="202" width="1" height="1" fill="#f2c200" opacity="0.2"/><rect x="102" y="202" width="1" height="2" fill="#f2c200" opacity="0.3"/><rect x="105" y="202" width="1" height="1" fill="#f2c200" opacity="0.45"/><rect x="107" y="202" width="1" height="2" fill="#f2c200" opacity="0.3"/><rect x="114" y="202" width="1" height="2" fill="#f2c200" opacity="0.45"/><rect x="117" y="202" width="1" height="1" fill="#f2c200" opacity="0.2"/><rect x="119" y="202" width="1" height="2" fill="#f2c200" opacity="0.3"/><rect x="120" y="202" width="1" height="1" fill="#f2c200" opacity="0.2"/><rect x="121" y="202" width="1" height="3" fill="#f2c200" opacity="0.45"/><rect x="123" y="202" width="1" height="1" fill="#f2c200" opacity="0.3"/><rect x="128" y="202" width="1" height="1" fill="#f2c200" opacity="0.2"/><rect x="131" y="202" width="1" height="1" fill="#f2c200" opacity="0.2"/><rect x="133" y="202" width="1" height="1" fill="#f2c200" opacity="0.45"/><rect x="134" y="202" width="1" height="1" fill="#f2c200" opacity="0.2"/><rect x="135" y="202" width="1" height="3" fill="#f2c200" opacity="0.3"/><rect x="154" y="202" width="1" height="1" fill="#f2c200" opacity="0.3"/><rect x="162" y="202" width="1" height="3" fill="#f2c200" opacity="0.2"/><rect x="163" y="202" width="1" height="1" fill="#f2c200" opacity="0.3"/><rect x="164" y="202" width="1" height="1" fill="#f2c200" opacity="0.3"/><rect x="170" y="202" width="1" height="3" fill="#f2c200" opacity="0.2"/><rect x="173" y="202" width="1" height="2" fill="#f2c200" opacity="0.3"/><rect x="175" y="202" width="1" height="2" fill="#f2c200" opacity="0.2"/><rect x="179" y="202" width="1" height="1" fill="#f2c200" opacity="0.3"/><rect x="180" y="202" width="1" height="2" fill="#f2c200" opacity="0.2"/><rect x="181" y="202" width="1" height="2" fill="#f2c200" opacity="0.3"/><rect x="186" y="202" width="1" height="1" fill="#f2c200" opacity="0.2"/><rect x="188" y="202" width="1" height="1" fill="#f2c200" opacity="0.3"/><polyline points="194,200 196,203 197.5,210 198.5,207 200,195 202,187 204,190 206,199 208,203 210,199 212,202 214,200.5 217,200" fill="none" stroke="#f2c200" stroke-width="1.1" opacity="0.75" shape-rendering="auto"/><rect x="216" y="199" width="322" height="2" fill="#f2c200"/><rect x="216" y="201" width="322" height="2" fill="#f2c200" opacity="0.2"/></g>
<defs><clipPath id="gc"><rect x="25" y="40" width="749" height="479"/></clipPath></defs>
<g shape-rendering="crispEdges" clip-path="url(#gc)"><rect x="546.50" y="149" width="1.4" height="32" fill="#3c2e00"/><polygon points="546.50,176 548.00,176 550.50,200 550.50,212 548.50,218 546.50,218" fill="#43340a"/><rect x="547.00" y="184" width="1" height="32" fill="#7a5c00"/><rect x="551.50" y="204" width="1" height="14" fill="#5a4400"/><rect x="556.00" y="204" width="1" height="18" fill="#5a4400"/><rect x="546.50" y="222" width="1" height="196" fill="#201a00"/><rect x="556.00" y="204" width="1" height="216" fill="#201a00"/><polygon points="539.00,404 540.50,404 542.50,418 541.50,436 539.00,442" fill="#4a3a08"/><rect x="539.50" y="410" width="1" height="24" fill="#6a5000"/><rect x="539.50" y="441" width="1" height="37" fill="#201a00"/><polyline points="541.00,414 543.50,427 546.50,417 547.50,416" fill="none" stroke="#b08800" stroke-width="1.1" shape-rendering="auto"/><rect x="565.27" y="149" width="1.4" height="32" fill="#3c2e00"/><polygon points="565.27,176 566.77,176 569.27,200 569.27,212 567.27,218 565.27,218" fill="#43340a"/><rect x="565.77" y="184" width="1" height="32" fill="#7a5c00"/><rect x="570.27" y="204" width="1" height="14" fill="#5a4400"/><rect x="574.77" y="204" width="1" height="18" fill="#5a4400"/><rect x="565.27" y="222" width="1" height="196" fill="#201a00"/><rect x="574.77" y="204" width="1" height="216" fill="#201a00"/><polygon points="557.77,404 559.27,404 561.27,418 560.27,436 557.77,442" fill="#4a3a08"/><rect x="558.27" y="410" width="1" height="24" fill="#6a5000"/><rect x="558.27" y="441" width="1" height="37" fill="#201a00"/><polyline points="559.77,414 562.27,427 565.27,417 566.27,416" fill="none" stroke="#b08800" stroke-width="1.1" shape-rendering="auto"/><rect x="584.04" y="149" width="1.4" height="32" fill="#3c2e00"/><polygon points="584.04,176 585.54,176 588.04,200 588.04,212 586.04,218 584.04,218" fill="#43340a"/><rect x="584.54" y="184" width="1" height="32" fill="#7a5c00"/><rect x="589.04" y="204" width="1" height="14" fill="#5a4400"/><rect x="593.54" y="204" width="1" height="18" fill="#5a4400"/><rect x="584.04" y="222" width="1" height="196" fill="#201a00"/><rect x="593.54" y="204" width="1" height="216" fill="#201a00"/><polygon points="576.54,404 578.04,404 580.04,418 579.04,436 576.54,442" fill="#4a3a08"/><rect x="577.04" y="410" width="1" height="24" fill="#6a5000"/><rect x="577.04" y="441" width="1" height="37" fill="#201a00"/><polyline points="578.54,414 581.04,427 584.04,417 585.04,416" fill="none" stroke="#b08800" stroke-width="1.1" shape-rendering="auto"/><rect x="602.81" y="149" width="1.4" height="32" fill="#3c2e00"/><polygon points="602.81,176 604.31,176 606.81,200 606.81,212 604.81,218 602.81,218" fill="#43340a"/><rect x="603.31" y="184" width="1" height="32" fill="#7a5c00"/><rect x="607.81" y="204" width="1" height="14" fill="#5a4400"/><rect x="612.31" y="204" width="1" height="18" fill="#5a4400"/><rect x="602.81" y="222" width="1" height="196" fill="#201a00"/><rect x="612.31" y="204" width="1" height="216" fill="#201a00"/><polygon points="595.31,404 596.81,404 598.81,418 597.81,436 595.31,442" fill="#4a3a08"/><rect x="595.81" y="410" width="1" height="24" fill="#6a5000"/><rect x="595.81" y="441" width="1" height="37" fill="#201a00"/><polyline points="597.31,414 599.81,427 602.81,417 603.81,416" fill="none" stroke="#b08800" stroke-width="1.1" shape-rendering="auto"/><rect x="621.58" y="149" width="1.4" height="32" fill="#3c2e00"/><polygon points="621.58,176 623.08,176 625.58,200 625.58,212 623.58,218 621.58,218" fill="#43340a"/><rect x="622.08" y="184" width="1" height="32" fill="#7a5c00"/><rect x="626.58" y="204" width="1" height="14" fill="#5a4400"/><rect x="631.08" y="204" width="1" height="18" fill="#5a4400"/><rect x="621.58" y="222" width="1" height="196" fill="#201a00"/><rect x="631.08" y="204" width="1" height="216" fill="#201a00"/><polygon points="614.08,404 615.58,404 617.58,418 616.58,436 614.08,442" fill="#4a3a08"/><rect x="614.58" y="410" width="1" height="24" fill="#6a5000"/><rect x="614.58" y="441" width="1" height="37" fill="#201a00"/><polyline points="616.08,414 618.58,427 621.58,417 622.58,416" fill="none" stroke="#b08800" stroke-width="1.1" shape-rendering="auto"/><rect x="640.35" y="149" width="1.4" height="32" fill="#3c2e00"/><polygon points="640.35,176 641.85,176 644.35,200 644.35,212 642.35,218 640.35,218" fill="#43340a"/><rect x="640.85" y="184" width="1" height="32" fill="#7a5c00"/><rect x="645.35" y="204" width="1" height="14" fill="#5a4400"/><rect x="649.85" y="204" width="1" height="18" fill="#5a4400"/><rect x="640.35" y="222" width="1" height="196" fill="#201a00"/><rect x="649.85" y="204" width="1" height="216" fill="#201a00"/><polygon points="632.85,404 634.35,404 636.35,418 635.35,436 632.85,442" fill="#4a3a08"/><rect x="633.35" y="410" width="1" height="24" fill="#6a5000"/><rect x="633.35" y="441" width="1" height="37" fill="#201a00"/><polyline points="634.85,414 637.35,427 640.35,417 641.35,416" fill="none" stroke="#b08800" stroke-width="1.1" shape-rendering="auto"/><rect x="659.12" y="149" width="1.4" height="32" fill="#3c2e00"/><polygon points="659.12,176 660.62,176 663.12,200 663.12,212 661.12,218 659.12,218" fill="#43340a"/><rect x="659.62" y="184" width="1" height="32" fill="#7a5c00"/><rect x="664.12" y="204" width="1" height="14" fill="#5a4400"/><rect x="668.62" y="204" width="1" height="18" fill="#5a4400"/><rect x="659.12" y="222" width="1" height="196" fill="#201a00"/><rect x="668.62" y="204" width="1" height="216" fill="#201a00"/><polygon points="651.62,404 653.12,404 655.12,418 654.12,436 651.62,442" fill="#4a3a08"/><rect x="652.12" y="410" width="1" height="24" fill="#6a5000"/><rect x="652.12" y="441" width="1" height="37" fill="#201a00"/><polyline points="653.62,414 656.12,427 659.12,417 660.12,416" fill="none" stroke="#b08800" stroke-width="1.1" shape-rendering="auto"/><rect x="677.89" y="149" width="1.4" height="32" fill="#3c2e00"/><polygon points="677.89,176 679.39,176 681.89,200 681.89,212 679.89,218 677.89,218" fill="#43340a"/><rect x="678.39" y="184" width="1" height="32" fill="#7a5c00"/><rect x="682.89" y="204" width="1" height="14" fill="#5a4400"/><rect x="687.39" y="204" width="1" height="18" fill="#5a4400"/><rect x="677.89" y="222" width="1" height="196" fill="#201a00"/><rect x="687.39" y="204" width="1" height="216" fill="#201a00"/><polygon points="670.39,404 671.89,404 673.89,418 672.89,436 670.39,442" fill="#4a3a08"/><rect x="670.89" y="410" width="1" height="24" fill="#6a5000"/><rect x="670.89" y="441" width="1" height="37" fill="#201a00"/><polyline points="672.39,414 674.89,427 677.89,417 678.89,416" fill="none" stroke="#b08800" stroke-width="1.1" shape-rendering="auto"/><rect x="696.66" y="149" width="1.4" height="32" fill="#3c2e00"/><polygon points="696.66,176 698.16,176 700.66,200 700.66,212 698.66,218 696.66,218" fill="#43340a"/><rect x="697.16" y="184" width="1" height="32" fill="#7a5c00"/><rect x="701.66" y="204" width="1" height="14" fill="#5a4400"/><rect x="706.16" y="204" width="1" height="18" fill="#5a4400"/><rect x="696.66" y="222" width="1" height="196" fill="#201a00"/><rect x="706.16" y="204" width="1" height="216" fill="#201a00"/><polygon points="689.16,404 690.66,404 692.66,418 691.66,436 689.16,442" fill="#4a3a08"/><rect x="689.66" y="410" width="1" height="24" fill="#6a5000"/><rect x="689.66" y="441" width="1" height="37" fill="#201a00"/><polyline points="691.16,414 693.66,427 696.66,417 697.66,416" fill="none" stroke="#b08800" stroke-width="1.1" shape-rendering="auto"/><rect x="715.43" y="149" width="1.4" height="32" fill="#3c2e00"/><polygon points="715.43,176 716.93,176 719.43,200 719.43,212 717.43,218 715.43,218" fill="#43340a"/><rect x="715.93" y="184" width="1" height="32" fill="#7a5c00"/><rect x="720.43" y="204" width="1" height="14" fill="#5a4400"/><rect x="724.93" y="204" width="1" height="18" fill="#5a4400"/><rect x="715.43" y="222" width="1" height="196" fill="#201a00"/><rect x="724.93" y="204" width="1" height="216" fill="#201a00"/><polygon points="707.93,404 709.43,404 711.43,418 710.43,436 707.93,442" fill="#4a3a08"/><rect x="708.43" y="410" width="1" height="24" fill="#6a5000"/><rect x="708.43" y="441" width="1" height="37" fill="#201a00"/><polyline points="709.93,414 712.43,427 715.43,417 716.43,416" fill="none" stroke="#b08800" stroke-width="1.1" shape-rendering="auto"/><rect x="734.20" y="149" width="1.4" height="32" fill="#3c2e00"/><polygon points="734.20,176 735.70,176 738.20,200 738.20,212 736.20,218 734.20,218" fill="#43340a"/><rect x="734.70" y="184" width="1" height="32" fill="#7a5c00"/><rect x="739.20" y="204" width="1" height="14" fill="#5a4400"/><rect x="743.70" y="204" width="1" height="18" fill="#5a4400"/><rect x="734.20" y="222" width="1" height="196" fill="#201a00"/><rect x="743.70" y="204" width="1" height="216" fill="#201a00"/><polygon points="726.70,404 728.20,404 730.20,418 729.20,436 726.70,442" fill="#4a3a08"/><rect x="727.20" y="410" width="1" height="24" fill="#6a5000"/><rect x="727.20" y="441" width="1" height="37" fill="#201a00"/><polyline points="728.70,414 731.20,427 734.20,417 735.20,416" fill="none" stroke="#b08800" stroke-width="1.1" shape-rendering="auto"/><rect x="752.97" y="149" width="1.4" height="32" fill="#3c2e00"/><polygon points="752.97,176 754.47,176 756.97,200 756.97,212 754.97,218 752.97,218" fill="#43340a"/><rect x="753.47" y="184" width="1" height="32" fill="#7a5c00"/><rect x="757.97" y="204" width="1" height="14" fill="#5a4400"/><rect x="762.47" y="204" width="1" height="18" fill="#5a4400"/><rect x="752.97" y="222" width="1" height="196" fill="#201a00"/><rect x="762.47" y="204" width="1" height="216" fill="#201a00"/><polygon points="745.47,404 746.97,404 748.97,418 747.97,436 745.47,442" fill="#4a3a08"/><rect x="745.97" y="410" width="1" height="24" fill="#6a5000"/><rect x="745.97" y="441" width="1" height="37" fill="#201a00"/><polyline points="747.47,414 749.97,427 752.97,417 753.97,416" fill="none" stroke="#b08800" stroke-width="1.1" shape-rendering="auto"/><rect x="771.74" y="149" width="1.4" height="32" fill="#3c2e00"/><polygon points="771.74,176 773.24,176 775.74,200 775.74,212 773.74,218 771.74,218" fill="#43340a"/><rect x="772.24" y="184" width="1" height="32" fill="#7a5c00"/><rect x="776.74" y="204" width="1" height="14" fill="#5a4400"/><rect x="781.24" y="204" width="1" height="18" fill="#5a4400"/><rect x="771.74" y="222" width="1" height="196" fill="#201a00"/><polygon points="764.24,404 765.74,404 767.74,418 766.74,436 764.24,442" fill="#4a3a08"/><rect x="764.74" y="410" width="1" height="24" fill="#6a5000"/><rect x="764.74" y="441" width="1" height="37" fill="#201a00"/><polyline points="766.24,414 768.74,427 771.74,417 772.74,416" fill="none" stroke="#b08800" stroke-width="1.1" shape-rendering="auto"/></g>
<g shape-rendering="crispEdges" clip-path="url(#gc)"><rect x="25" y="394" width="135" height="2" fill="#00ffff"/><rect x="25" y="396" width="135" height="1" fill="#00ffff" opacity="0.7"/><rect x="28" y="392" width="1" height="2" fill="#00ffff" opacity="0.55"/><rect x="32" y="397" width="1" height="2" fill="#00ffff" opacity="0.55"/><rect x="36" y="397" width="1" height="1" fill="#00ffff" opacity="0.55"/><rect x="42" y="392" width="1" height="2" fill="#00ffff" opacity="0.55"/><rect x="46" y="397" width="1" height="2" fill="#00ffff" opacity="0.55"/><rect x="50" y="397" width="1" height="1" fill="#00ffff" opacity="0.55"/><rect x="56" y="392" width="1" height="2" fill="#00ffff" opacity="0.55"/><rect x="60" y="397" width="1" height="2" fill="#00ffff" opacity="0.55"/><rect x="64" y="397" width="1" height="1" fill="#00ffff" opacity="0.55"/><rect x="70" y="392" width="1" height="2" fill="#00ffff" opacity="0.55"/><rect x="74" y="397" width="1" height="2" fill="#00ffff" opacity="0.55"/><rect x="78" y="397" width="1" height="1" fill="#00ffff" opacity="0.55"/><rect x="84" y="392" width="1" height="2" fill="#00ffff" opacity="0.55"/><rect x="88" y="397" width="1" height="2" fill="#00ffff" opacity="0.55"/><rect x="92" y="397" width="1" height="1" fill="#00ffff" opacity="0.55"/><rect x="98" y="392" width="1" height="2" fill="#00ffff" opacity="0.55"/><rect x="102" y="397" width="1" height="2" fill="#00ffff" opacity="0.55"/><rect x="106" y="397" width="1" height="1" fill="#00ffff" opacity="0.55"/><rect x="112" y="392" width="1" height="2" fill="#00ffff" opacity="0.55"/><rect x="116" y="397" width="1" height="2" fill="#00ffff" opacity="0.55"/><rect x="120" y="397" width="1" height="1" fill="#00ffff" opacity="0.55"/><rect x="126" y="392" width="1" height="2" fill="#00ffff" opacity="0.55"/><rect x="130" y="397" width="1" height="2" fill="#00ffff" opacity="0.55"/><rect x="134" y="397" width="1" height="1" fill="#00ffff" opacity="0.55"/><rect x="140" y="392" width="1" height="2" fill="#00ffff" opacity="0.55"/><rect x="144" y="397" width="1" height="2" fill="#00ffff" opacity="0.55"/><rect x="148" y="397" width="1" height="1" fill="#00ffff" opacity="0.55"/><rect x="154" y="392" width="1" height="2" fill="#00ffff" opacity="0.55"/><rect x="158" y="397" width="1" height="2" fill="#00ffff" opacity="0.55"/><polyline points="159,395 163,396 167,393 170,390.5 173,390.5 176,395 179,398 182,397 186,393.5 190,393.5 193,395 196,395" fill="none" stroke="#00ffff" stroke-width="2.4" shape-rendering="auto"/><polyline points="196,395 198.5,300 200.5,220" fill="none" stroke="#00ffff" stroke-width="1" opacity="0.3" shape-rendering="auto"/><polyline points="200.5,220 202,175 203.5,151" fill="none" stroke="#00ffff" stroke-width="1.2" opacity="0.55" shape-rendering="auto"/><polyline points="203.5,151 205,160 207,185 209.5,203 212.5,211.5 215,205 218,197.5 221,200.5" fill="none" stroke="#00ffff" stroke-width="1.3" shape-rendering="auto"/><rect x="221" y="199" width="74" height="2" fill="#00ffff"/><rect x="221" y="201" width="74" height="1" fill="#00ffff" opacity="0.45"/><rect x="295" y="201" width="14" height="2" fill="#00ffff"/><rect x="295" y="203" width="14" height="1" fill="#00ffff" opacity="0.45"/><rect x="309" y="199" width="13" height="2" fill="#00ffff"/><rect x="309" y="201" width="13" height="1" fill="#00ffff" opacity="0.45"/><rect x="322" y="201" width="15" height="2" fill="#00ffff"/><rect x="322" y="203" width="15" height="1" fill="#00ffff" opacity="0.45"/><rect x="337" y="199" width="13" height="2" fill="#00ffff"/><rect x="337" y="201" width="13" height="1" fill="#00ffff" opacity="0.45"/><rect x="350" y="201" width="15" height="2" fill="#00ffff"/><rect x="350" y="203" width="15" height="1" fill="#00ffff" opacity="0.45"/><rect x="365" y="199" width="175" height="2" fill="#00ffff"/><rect x="365" y="201" width="175" height="1" fill="#00ffff" opacity="0.45"/><rect x="230" y="199" width="1" height="3" fill="#00ffff" opacity="0.5"/><rect x="242" y="199" width="1" height="3" fill="#00ffff" opacity="0.5"/><rect x="250" y="198" width="1" height="3" fill="#00ffff" opacity="0.5"/><rect x="262" y="198" width="1" height="3" fill="#00ffff" opacity="0.5"/><rect x="270" y="197" width="1" height="3" fill="#00ffff" opacity="0.5"/><rect x="282" y="197" width="1" height="3" fill="#00ffff" opacity="0.5"/><rect x="290" y="199" width="1" height="3" fill="#00ffff" opacity="0.5"/><rect x="302" y="199" width="1" height="3" fill="#00ffff" opacity="0.5"/><rect x="310" y="198" width="1" height="3" fill="#00ffff" opacity="0.5"/><rect x="322" y="198" width="1" height="3" fill="#00ffff" opacity="0.5"/><rect x="330" y="197" width="1" height="3" fill="#00ffff" opacity="0.5"/><rect x="342" y="197" width="1" height="3" fill="#00ffff" opacity="0.5"/><rect x="350" y="199" width="1" height="3" fill="#00ffff" opacity="0.5"/><rect x="362" y="199" width="1" height="3" fill="#00ffff" opacity="0.5"/><rect x="370" y="198" width="1" height="3" fill="#00ffff" opacity="0.5"/><rect x="382" y="198" width="1" height="3" fill="#00ffff" opacity="0.5"/><rect x="390" y="197" width="1" height="3" fill="#00ffff" opacity="0.5"/><rect x="402" y="197" width="1" height="3" fill="#00ffff" opacity="0.5"/><rect x="410" y="199" width="1" height="3" fill="#00ffff" opacity="0.5"/><rect x="422" y="199" width="1" height="3" fill="#00ffff" opacity="0.5"/><rect x="430" y="198" width="1" height="3" fill="#00ffff" opacity="0.5"/><rect x="442" y="198" width="1" height="3" fill="#00ffff" opacity="0.5"/><rect x="450" y="197" width="1" height="3" fill="#00ffff" opacity="0.5"/><rect x="462" y="197" width="1" height="3" fill="#00ffff" opacity="0.5"/><rect x="470" y="199" width="1" height="3" fill="#00ffff" opacity="0.5"/><rect x="482" y="199" width="1" height="3" fill="#00ffff" opacity="0.5"/><rect x="490" y="198" width="1" height="3" fill="#00ffff" opacity="0.5"/><rect x="502" y="198" width="1" height="3" fill="#00ffff" opacity="0.5"/><rect x="510" y="197" width="1" height="3" fill="#00ffff" opacity="0.5"/><rect x="522" y="197" width="1" height="3" fill="#00ffff" opacity="0.5"/><rect x="530" y="199" width="1" height="3" fill="#00ffff" opacity="0.5"/><polyline points="538.00,201 547.50,202.5 548.50,203.5 550.50,198 553.50,197.5 558.00,198 559.50,202.5 564.50,202.5 566.27,202.5 567.27,203.5 569.27,198 572.27,197.5 576.77,198 578.27,202.5 583.27,202.5 585.04,202.5 586.04,203.5 588.04,198 591.04,197.5 595.54,198 597.04,202.5 602.04,202.5 603.81,202.5 604.81,203.5 606.81,198 609.81,197.5 614.31,198 615.81,202.5 620.81,202.5 622.58,202.5 623.58,203.5 625.58,198 628.58,197.5 633.08,198 634.58,202.5 639.58,202.5 641.35,202.5 642.35,203.5 644.35,198 647.35,197.5 651.85,198 653.35,202.5 658.35,202.5 660.12,202.5 661.12,203.5 663.12,198 666.12,197.5 670.62,198 672.12,202.5 677.12,202.5 678.89,202.5 679.89,203.5 681.89,198 684.89,197.5 689.39,198 690.89,202.5 695.89,202.5 697.66,202.5 698.66,203.5 700.66,198 703.66,197.5 708.16,198 709.66,202.5 714.66,202.5 716.43,202.5 717.43,203.5 719.43,198 722.43,197.5 726.93,198 728.43,202.5 733.43,202.5 735.20,202.5 736.20,203.5 738.20,198 741.20,197.5 745.70,198 747.20,202.5 752.20,202.5 753.97,202.5 754.97,203.5 756.97,198 759.97,197.5 764.47,198 765.97,202.5 770.97,202.5 772.74,202.5 773.00,201.5" fill="none" stroke="#00ffff" stroke-width="2.4" shape-rendering="auto"/><polyline points="538.00,203.4 547.50,204.9 548.50,205.9 550.50,200.4 553.50,199.9 558.00,200.4 559.50,204.9 564.50,204.9 566.27,204.9 567.27,205.9 569.27,200.4 572.27,199.9 576.77,200.4 578.27,204.9 583.27,204.9 585.04,204.9 586.04,205.9 588.04,200.4 591.04,199.9 595.54,200.4 597.04,204.9 602.04,204.9 603.81,204.9 604.81,205.9 606.81,200.4 609.81,199.9 614.31,200.4 615.81,204.9 620.81,204.9 622.58,204.9 623.58,205.9 625.58,200.4 628.58,199.9 633.08,200.4 634.58,204.9 639.58,204.9 641.35,204.9 642.35,205.9 644.35,200.4 647.35,199.9 651.85,200.4 653.35,204.9 658.35,204.9 660.12,204.9 661.12,205.9 663.12,200.4 666.12,199.9 670.62,200.4 672.12,204.9 677.12,204.9 678.89,204.9 679.89,205.9 681.89,200.4 684.89,199.9 689.39,200.4 690.89,204.9 695.89,204.9 697.66,204.9 698.66,205.9 700.66,200.4 703.66,199.9 708.16,200.4 709.66,204.9 714.66,204.9 716.43,204.9 717.43,205.9 719.43,200.4 722.43,199.9 726.93,200.4 728.43,204.9 733.43,204.9 735.20,204.9 736.20,205.9 738.20,200.4 741.20,199.9 745.70,200.4 747.20,204.9 752.20,204.9 753.97,204.9 754.97,205.9 756.97,200.4 759.97,199.9 764.47,200.4 765.97,204.9 770.97,204.9 772.74,204.9 773.00,203.9" fill="none" stroke="#00ffff" stroke-width="1.4" opacity="0.35" shape-rendering="auto"/></g>
<rect x="36.5" y="52.5" width="230" height="64" rx="4" fill="none" stroke="#fff" stroke-width="1"/>
<g shape-rendering="crispEdges"><line x1="197.5" y1="40" x2="197.5" y2="519" stroke="#00ffff" stroke-width="1" stroke-dasharray="4 4"/><rect x="187" y="295" width="20" height="1" fill="#00ffff"/><rect x="537" y="40" width="1" height="479" fill="#00ffff"/><rect x="527" y="197" width="20" height="1" fill="#00ffff"/></g>
<polyline points="392.5,40.5 399.5,47.5 406.5,40.5" fill="none" stroke="#ffcc00" stroke-width="1.2"/>
<polygon points="540,40 553,40 546.5,47" fill="#ffcc00"/>
<polygon points="767,288.5 774,282 774,295" fill="#ffcc00"/>
<polygon points="3.5,390.5 18.5,390.5 22.5,396.5 18.5,402.5 3.5,402.5" fill="#00ffff" stroke="#000" stroke-width="1"/>
<path d="M9.5,394.5 Q10,392.5 12,392.5 Q14.5,392.5 14.5,394.5 Q14.5,396 12,397.5 L9.5,400 L15,400" fill="none" stroke="#000" stroke-width="1.4"/>
<rect x="26.5" y="479.5" width="746" height="38" rx="3" fill="#000" stroke="#fff" stroke-width="1"/>
<rect x="643.5" y="458.5" width="129" height="19" rx="4" fill="#000" stroke="#fff" stroke-width="1"/>
<rect x="1.5" y="521.5" width="418" height="19" rx="4" fill="#000" stroke="#fff" stroke-width="1"/>
<rect x="425.5" y="521.5" width="167" height="19" rx="4" fill="#000" stroke="#fff" stroke-width="1"/>
<rect x="499" y="524" width="14" height="14" rx="3" fill="#fff"/>
<g shape-rendering="crispEdges" fill="#000"><rect x="501" y="526" width="2" height="11"/><rect x="509" y="526" width="2" height="11"/><rect x="503" y="530" width="6" height="2"/></g>
<rect x="599.5" y="521.5" width="175" height="38" rx="4" fill="#000" stroke="#fff" stroke-width="1"/>
<rect x="17" y="542.5" width="107.5" height="56" rx="3" fill="#33ffff" stroke="#000a80" stroke-width="2"/>
<polygon points="60,573 82,573 84,575 84,590 82,592 60,592 58,590 58,575" fill="#ccffff"/>
<g shape-rendering="crispEdges" fill="#140808"><rect x="64" y="573" width="2" height="3"/><rect x="64" y="577" width="2" height="3"/><rect x="64" y="581" width="2" height="3"/><rect x="64" y="585" width="2" height="3"/><rect x="64" y="589" width="2" height="3"/><rect x="76" y="573" width="2" height="19"/></g>
<circle cx="46" cy="64.5" r="5.5" fill="#ff3300"/><polygon points="45.16,60.07 46.84,60.07 46.84,69.24 45.16,69.24 45.16,62.21 43.56,62.82 43.56,61.75" fill="#000"/>
<circle cx="46" cy="84.5" r="5.5" fill="#ff3300"/><g fill="#000" shape-rendering="crispEdges"><rect x="44" y="80" width="1" height="1"/><rect x="45" y="80" width="1" height="1"/><rect x="46" y="80" width="1" height="1"/><rect x="47" y="80" width="1" height="1"/><rect x="43" y="81" width="1" height="1"/><rect x="44" y="81" width="1" height="1"/><rect x="47" y="81" width="1" height="1"/><rect x="48" y="81" width="1" height="1"/><rect x="47" y="82" width="1" height="1"/><rect x="48" y="82" width="1" height="1"/><rect x="46" y="83" width="1" height="1"/><rect x="47" y="83" width="1" height="1"/><rect x="45" y="84" width="1" height="1"/><rect x="46" y="84" width="1" height="1"/><rect x="44" y="85" width="1" height="1"/><rect x="45" y="85" width="1" height="1"/><rect x="43" y="86" width="1" height="1"/><rect x="44" y="86" width="1" height="1"/><rect x="43" y="87" width="1" height="1"/><rect x="44" y="87" width="1" height="1"/><rect x="45" y="87" width="1" height="1"/><rect x="46" y="87" width="1" height="1"/><rect x="47" y="87" width="1" height="1"/><rect x="48" y="87" width="1" height="1"/></g>
<circle cx="205" cy="45" r="5.2" fill="#ff3300"/><polygon points="204.21,40.81 205.79,40.81 205.79,49.48 204.21,49.48 204.21,42.83 202.69,43.41 202.69,42.40" fill="#000"/>
<circle cx="530" cy="45.5" r="5.5" fill="#ff3300"/><g fill="#000" shape-rendering="crispEdges"><rect x="528" y="42" width="1" height="1"/><rect x="529" y="42" width="1" height="1"/><rect x="530" y="42" width="1" height="1"/><rect x="531" y="42" width="1" height="1"/><rect x="527" y="43" width="1" height="1"/><rect x="528" y="43" width="1" height="1"/><rect x="531" y="43" width="1" height="1"/><rect x="532" y="43" width="1" height="1"/><rect x="531" y="44" width="1" height="1"/><rect x="532" y="44" width="1" height="1"/><rect x="530" y="45" width="1" height="1"/><rect x="531" y="45" width="1" height="1"/><rect x="529" y="46" width="1" height="1"/><rect x="530" y="46" width="1" height="1"/><rect x="528" y="47" width="1" height="1"/><rect x="529" y="47" width="1" height="1"/><rect x="527" y="48" width="1" height="1"/><rect x="528" y="48" width="1" height="1"/><rect x="527" y="49" width="1" height="1"/><rect x="528" y="49" width="1" height="1"/><rect x="529" y="49" width="1" height="1"/><rect x="530" y="49" width="1" height="1"/><rect x="531" y="49" width="1" height="1"/><rect x="532" y="49" width="1" height="1"/></g>
<circle cx="36" cy="489.5" r="7.3" fill="#ffcc00"/><polygon points="34.88,483.62 37.12,483.62 37.12,495.79 34.88,495.79 34.88,486.46 32.76,487.27 32.76,485.85" fill="#000"/>
<circle cx="36" cy="507.5" r="7.3" fill="#00ffff"/><g fill="#000" shape-rendering="crispEdges"><rect x="34" y="502" width="1" height="1"/><rect x="35" y="502" width="1" height="1"/><rect x="36" y="502" width="1" height="1"/><rect x="37" y="502" width="1" height="1"/><rect x="33" y="503" width="1" height="1"/><rect x="34" y="503" width="1" height="1"/><rect x="37" y="503" width="1" height="1"/><rect x="38" y="503" width="1" height="1"/><rect x="32" y="504" width="1" height="1"/><rect x="33" y="504" width="1" height="1"/><rect x="38" y="504" width="1" height="1"/><rect x="39" y="504" width="1" height="1"/><rect x="38" y="505" width="1" height="1"/><rect x="39" y="505" width="1" height="1"/><rect x="37" y="506" width="1" height="1"/><rect x="38" y="506" width="1" height="1"/><rect x="36" y="507" width="1" height="1"/><rect x="37" y="507" width="1" height="1"/><rect x="35" y="508" width="1" height="1"/><rect x="36" y="508" width="1" height="1"/><rect x="34" y="509" width="1" height="1"/><rect x="35" y="509" width="1" height="1"/><rect x="33" y="510" width="1" height="1"/><rect x="34" y="510" width="1" height="1"/><rect x="32" y="511" width="1" height="1"/><rect x="33" y="511" width="1" height="1"/><rect x="32" y="512" width="1" height="1"/><rect x="33" y="512" width="1" height="1"/><rect x="34" y="512" width="1" height="1"/><rect x="35" y="512" width="1" height="1"/><rect x="36" y="512" width="1" height="1"/><rect x="37" y="512" width="1" height="1"/><rect x="38" y="512" width="1" height="1"/><rect x="39" y="512" width="1" height="1"/></g>
<circle cx="222" cy="489.5" r="7.3" fill="#ffcc00"/><polygon points="220.88,483.62 223.12,483.62 223.12,495.79 220.88,495.79 220.88,486.46 218.76,487.27 218.76,485.85" fill="#000"/>
<circle cx="222" cy="507.5" r="7.3" fill="#00ffff"/><g fill="#000" shape-rendering="crispEdges"><rect x="220" y="502" width="1" height="1"/><rect x="221" y="502" width="1" height="1"/><rect x="222" y="502" width="1" height="1"/><rect x="223" y="502" width="1" height="1"/><rect x="219" y="503" width="1" height="1"/><rect x="220" y="503" width="1" height="1"/><rect x="223" y="503" width="1" height="1"/><rect x="224" y="503" width="1" height="1"/><rect x="218" y="504" width="1" height="1"/><rect x="219" y="504" width="1" height="1"/><rect x="224" y="504" width="1" height="1"/><rect x="225" y="504" width="1" height="1"/><rect x="224" y="505" width="1" height="1"/><rect x="225" y="505" width="1" height="1"/><rect x="223" y="506" width="1" height="1"/><rect x="224" y="506" width="1" height="1"/><rect x="222" y="507" width="1" height="1"/><rect x="223" y="507" width="1" height="1"/><rect x="221" y="508" width="1" height="1"/><rect x="222" y="508" width="1" height="1"/><rect x="220" y="509" width="1" height="1"/><rect x="221" y="509" width="1" height="1"/><rect x="219" y="510" width="1" height="1"/><rect x="220" y="510" width="1" height="1"/><rect x="218" y="511" width="1" height="1"/><rect x="219" y="511" width="1" height="1"/><rect x="218" y="512" width="1" height="1"/><rect x="219" y="512" width="1" height="1"/><rect x="220" y="512" width="1" height="1"/><rect x="221" y="512" width="1" height="1"/><rect x="222" y="512" width="1" height="1"/><rect x="223" y="512" width="1" height="1"/><rect x="224" y="512" width="1" height="1"/><rect x="225" y="512" width="1" height="1"/></g>
<circle cx="408" cy="489.5" r="7.3" fill="#ffcc00"/><polygon points="406.88,483.62 409.12,483.62 409.12,495.79 406.88,495.79 406.88,486.46 404.76,487.27 404.76,485.85" fill="#000"/>
<circle cx="594" cy="489.5" r="7.3" fill="#00ffff"/><g fill="#000" shape-rendering="crispEdges"><rect x="592" y="484" width="1" height="1"/><rect x="593" y="484" width="1" height="1"/><rect x="594" y="484" width="1" height="1"/><rect x="595" y="484" width="1" height="1"/><rect x="591" y="485" width="1" height="1"/><rect x="592" y="485" width="1" height="1"/><rect x="595" y="485" width="1" height="1"/><rect x="596" y="485" width="1" height="1"/><rect x="590" y="486" width="1" height="1"/><rect x="591" y="486" width="1" height="1"/><rect x="596" y="486" width="1" height="1"/><rect x="597" y="486" width="1" height="1"/><rect x="596" y="487" width="1" height="1"/><rect x="597" y="487" width="1" height="1"/><rect x="595" y="488" width="1" height="1"/><rect x="596" y="488" width="1" height="1"/><rect x="594" y="489" width="1" height="1"/><rect x="595" y="489" width="1" height="1"/><rect x="593" y="490" width="1" height="1"/><rect x="594" y="490" width="1" height="1"/><rect x="592" y="491" width="1" height="1"/><rect x="593" y="491" width="1" height="1"/><rect x="591" y="492" width="1" height="1"/><rect x="592" y="492" width="1" height="1"/><rect x="590" y="493" width="1" height="1"/><rect x="591" y="493" width="1" height="1"/><rect x="590" y="494" width="1" height="1"/><rect x="591" y="494" width="1" height="1"/><rect x="592" y="494" width="1" height="1"/><rect x="593" y="494" width="1" height="1"/><rect x="594" y="494" width="1" height="1"/><rect x="595" y="494" width="1" height="1"/><rect x="596" y="494" width="1" height="1"/><rect x="597" y="494" width="1" height="1"/></g>
<circle cx="10" cy="531" r="7.2" fill="#ffcc00"/><polygon points="8.90,525.20 11.10,525.20 11.10,537.20 8.90,537.20 8.90,528.00 6.80,528.80 6.80,527.40" fill="#000"/>
<circle cx="117" cy="531" r="7.2" fill="#00ffff"/><g fill="#000" shape-rendering="crispEdges"><rect x="115" y="526" width="1" height="1"/><rect x="116" y="526" width="1" height="1"/><rect x="117" y="526" width="1" height="1"/><rect x="118" y="526" width="1" height="1"/><rect x="114" y="527" width="1" height="1"/><rect x="115" y="527" width="1" height="1"/><rect x="118" y="527" width="1" height="1"/><rect x="119" y="527" width="1" height="1"/><rect x="113" y="528" width="1" height="1"/><rect x="114" y="528" width="1" height="1"/><rect x="119" y="528" width="1" height="1"/><rect x="120" y="528" width="1" height="1"/><rect x="119" y="529" width="1" height="1"/><rect x="120" y="529" width="1" height="1"/><rect x="118" y="530" width="1" height="1"/><rect x="119" y="530" width="1" height="1"/><rect x="117" y="531" width="1" height="1"/><rect x="118" y="531" width="1" height="1"/><rect x="116" y="532" width="1" height="1"/><rect x="117" y="532" width="1" height="1"/><rect x="115" y="533" width="1" height="1"/><rect x="116" y="533" width="1" height="1"/><rect x="114" y="534" width="1" height="1"/><rect x="115" y="534" width="1" height="1"/><rect x="113" y="535" width="1" height="1"/><rect x="114" y="535" width="1" height="1"/><rect x="113" y="536" width="1" height="1"/><rect x="114" y="536" width="1" height="1"/><rect x="115" y="536" width="1" height="1"/><rect x="116" y="536" width="1" height="1"/><rect x="117" y="536" width="1" height="1"/><rect x="118" y="536" width="1" height="1"/><rect x="119" y="536" width="1" height="1"/><rect x="120" y="536" width="1" height="1"/></g>
<circle cx="224" cy="531" r="7.2" fill="#3a3a3a"/><text x="224" y="536.0" text-anchor="middle" font-family="Liberation Sans" font-weight="bold" font-size="14" fill="#000">3</text>
<circle cx="331" cy="531" r="7.2" fill="#3a3a3a"/><text x="331" y="536.0" text-anchor="middle" font-family="Liberation Sans" font-weight="bold" font-size="14" fill="#000">4</text>
<circle cx="629" cy="531.5" r="7.2" fill="#ffcc00"/><polygon points="627.90,525.70 630.10,525.70 630.10,537.70 627.90,537.70 627.90,528.50 625.80,529.30 625.80,527.90" fill="#000"/>
<g shape-rendering="crispEdges" fill="#ffcc00"><rect x="30" y="528" width="14" height="2"/><rect x="30" y="531" width="4" height="2"/><rect x="35" y="531" width="4" height="2"/><rect x="40" y="531" width="4" height="2"/></g>
<g shape-rendering="crispEdges" fill="#00ffff"><rect x="137" y="528" width="14" height="2"/><rect x="137" y="531" width="4" height="2"/><rect x="142" y="531" width="4" height="2"/><rect x="147" y="531" width="4" height="2"/></g>
<g shape-rendering="crispEdges" fill="#3a3a3a"><rect x="244" y="528" width="14" height="2"/><rect x="244" y="531" width="4" height="2"/><rect x="249" y="531" width="4" height="2"/><rect x="254" y="531" width="4" height="2"/></g>
<g shape-rendering="crispEdges" fill="#3a3a3a"><rect x="351" y="528" width="14" height="2"/><rect x="351" y="531" width="4" height="2"/><rect x="356" y="531" width="4" height="2"/><rect x="361" y="531" width="4" height="2"/></g>
<g fill="#ffcc00" shape-rendering="crispEdges"><rect x="654" y="537" width="5" height="1"/><rect x="659" y="525" width="1" height="13"/><rect x="659" y="525" width="5" height="1"/></g><polyline points="655.5,531.5 659.5,527.5 663.5,531.5" fill="none" stroke="#ffcc00" stroke-width="1"/>
<polygon points="61.5,99.5 56.5,108.5 66.5,108.5" fill="none" stroke="#fff" stroke-width="1.2"/>
<polygon points="153.5,99.5 148.5,108.5 158.5,108.5" fill="none" stroke="#fff" stroke-width="1.2"/>
<g fill="#fff" shape-rendering="crispEdges"><rect x="70" y="63" width="7" height="1"/><rect x="70" y="83" width="7" height="1"/><rect x="524" y="530" width="7" height="1"/></g>
<rect x="645" y="460" width="23" height="15.5" rx="7.5" fill="#fff"/>
<g fill="#000" shape-rendering="crispEdges"><rect x="653" y="462" width="2.5" height="12"/><rect x="653" y="462" width="8" height="2"/><rect x="653" y="467" width="7" height="2"/></g>
</svg>
<div class="m" style="left:69px;top:57px;color:#fff"> 2.32us</div>
<div class="m" style="left:161px;top:57px;color:#fff">1.68V</div>
<div class="m" style="left:69px;top:77px;color:#fff"> 60.0ns</div>
<div class="m" style="left:161px;top:77px;color:#fff">3.32V</div>
<div class="m" style="left:69px;top:97px;color:#fff">2.26us</div>
<div class="m" style="left:161px;top:97px;color:#fff">1.64V</div>
<div class="m" style="left:677px;top:5px;color:#fff">26 Sep 2020</div>
<div class="m" style="left:697px;top:21px;color:#fff">16</div>
<div class="m" style="left:715px;top:21px;color:#fff">:</div>
<div class="m" style="left:723px;top:21px;color:#fff">09</div>
<div class="m" style="left:741px;top:21px;color:#fff">:</div>
<div class="m" style="left:749px;top:21px;color:#fff">38</div>
<div class="m" style="left:44px;top:482px;color:#ffcc00">Frequency 8.000MHz</div>
<div class="m" style="left:230px;top:482px;color:#ffcc00">RiseTime 4.054ns</div>
<div class="m" style="left:416px;top:482px;color:#ffcc00">FallTime 3.911ns</div>
<div class="m" style="left:602px;top:482px;color:#00ffff">Frequency ?</div>
<div class="m" style="left:44px;top:500px;color:#00ffff">RiseTime 29.34ns</div>
<div class="m" style="left:230px;top:500px;color:#00ffff">FallTime ?</div>
<div class="m" style="left:680px;top:461px;color:#fff">3.19736kHz</div>
<div class="m" style="left:66px;top:524px;color:#ffcc00">1V</div>
<div class="m" style="left:173px;top:524px;color:#00ffff">1V</div>
<div class="m" style="left:267px;top:524px;color:#3c3c3c">100mV</div>
<div class="m" style="left:374px;top:524px;color:#3c3c3c">100mV</div>
<div class="m" style="left:449px;top:524px;color:#fff">500ns</div>
<div class="m" style="left:523px;top:524px;color:#fff"> 980.0ns</div>
<div class="m" style="left:680px;top:524px;color:#ffcc00">1.80V</div>
<div class="m" style="left:755px;top:524px;color:#ffcc00">DC</div>
<div class="s" style="left:566px;top:9px;font-size:15px;color:#ff1a1a">Stop</div>
<div class="s" style="left:33px;top:552px;font-size:17px;line-height:17px;font-weight:normal;color:#1a0a0a;-webkit-text-stroke:0.3px #1a0a0a">H</div><div class="s" style="left:53px;top:552px;font-size:17px;line-height:17px;font-weight:normal;color:#1a0a0a;letter-spacing:0.4px;-webkit-text-stroke:0.3px #1a0a0a">Cursor</div>
</body></html>
